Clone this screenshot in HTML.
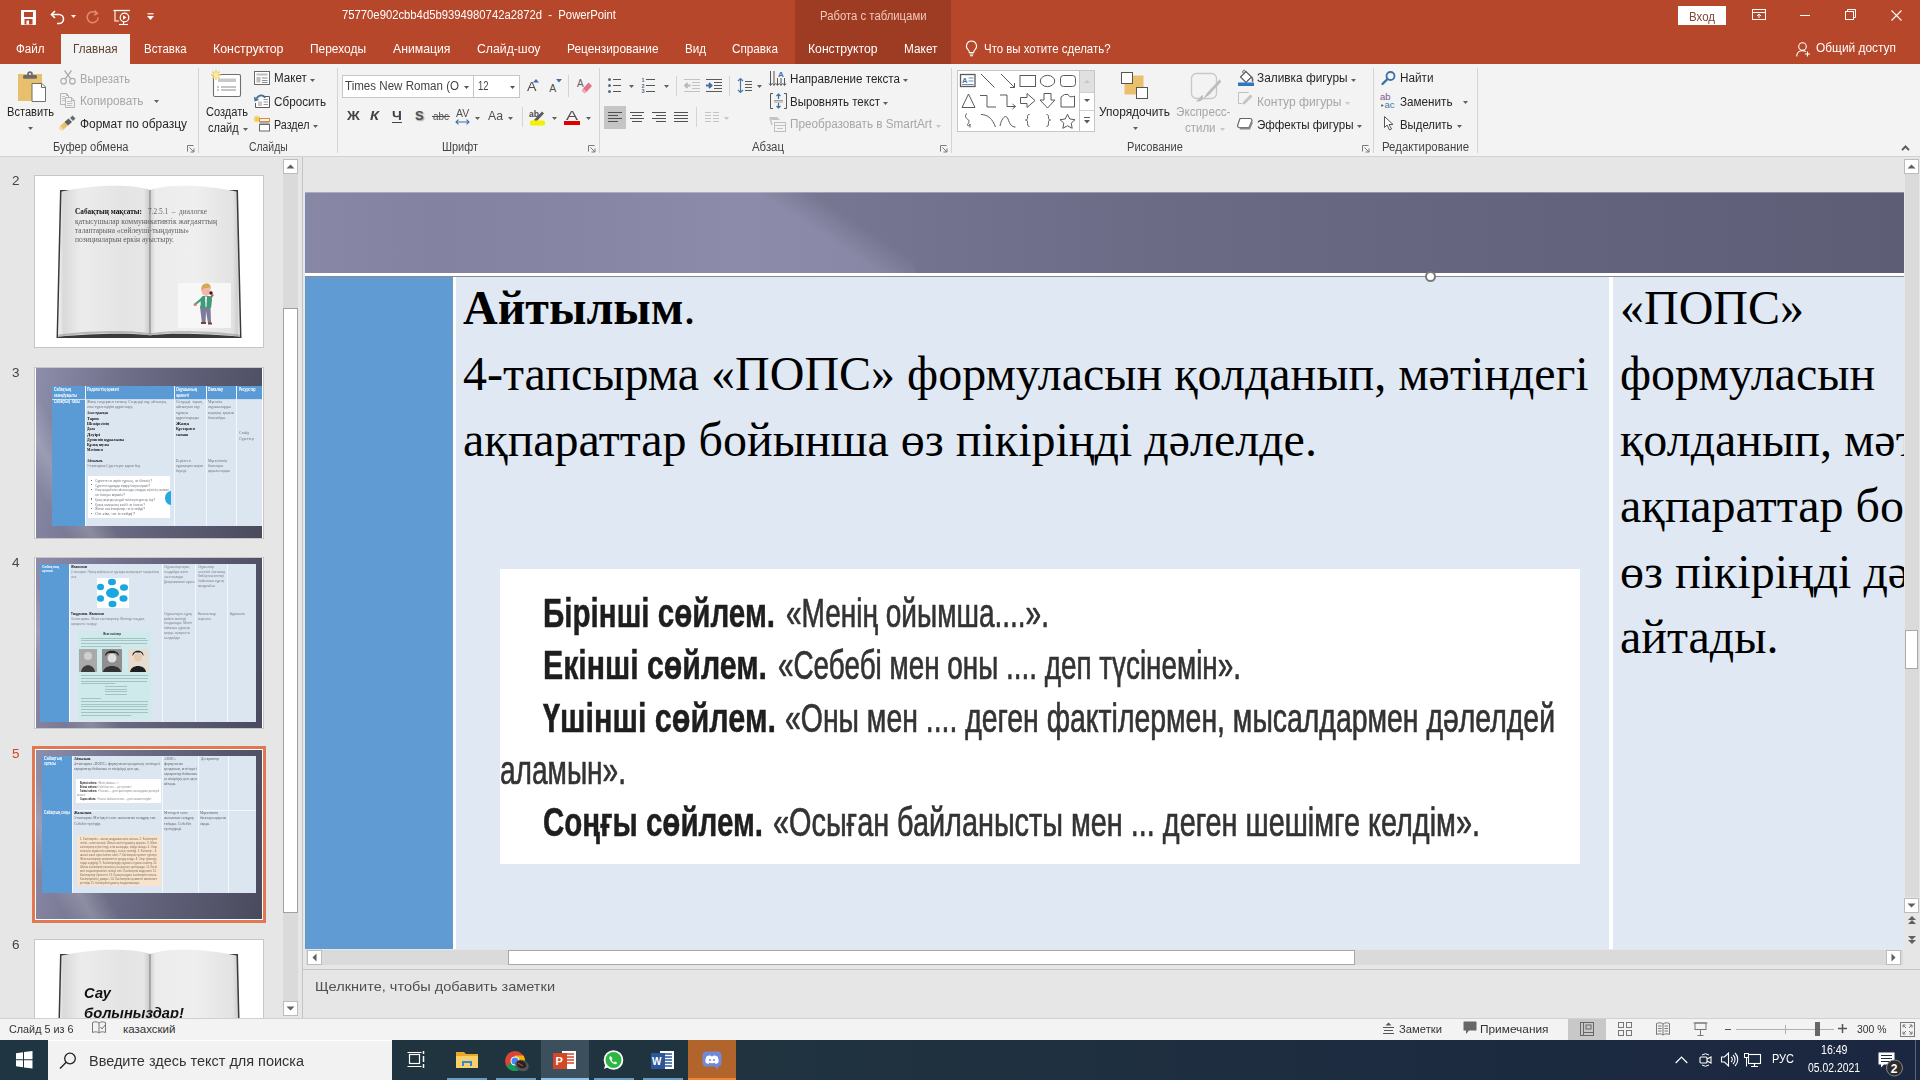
<!DOCTYPE html>
<html><head><meta charset="utf-8">
<style>
*{margin:0;padding:0;box-sizing:border-box}
html,body{width:1920px;height:1080px;overflow:hidden;background:#e6e6e6;font-family:"Liberation Sans",sans-serif;position:relative}
.a{position:absolute;white-space:nowrap}
svg.a{overflow:visible}

</style></head><body>
<div class="a" style="left:0px;top:0px;width:1920px;height:64px;background:#b7472a;"></div>
<div class="a" style="left:795px;top:0px;width:156px;height:64px;background:#9e3c23;"></div>
<svg class="a" style="left:21px;top:10px;" width="15" height="15" viewBox="0 0 15 15"><path d="M0.5 0.5h14v14h-14z" fill="#fff" stroke="#fff"/><rect x="3" y="2" width="9" height="5" fill="#b7472a"/><rect x="3.5" y="9" width="8" height="5.5" fill="#b7472a"/><rect x="5.5" y="10.5" width="2.5" height="4" fill="#fff"/></svg>
<svg class="a" style="left:50px;top:9px;" width="16" height="15" viewBox="0 0 16 15"><path d="M5 2 L1.5 5.5 L5 9" fill="none" stroke="#fff" stroke-width="1.6"/><path d="M2 5.5 H9 A4.5 4.5 0 0 1 9 14.5 H7" fill="none" stroke="#fff" stroke-width="1.6"/></svg>
<svg class="a" style="left:71px;top:15px;" width="6" height="4" viewBox="0 0 6 4"><path d="M0 0H5L2.5 3z" fill="#fff"/></svg>
<svg class="a" style="left:86px;top:10px;" width="14" height="14" viewBox="0 0 14 14"><path d="M10.5 3.2 A5.5 5.5 0 1 0 12.2 7.5" fill="none" stroke="#e38a73" stroke-width="1.5"/><path d="M8.5 0.5 L11.5 3.5 L8 5" fill="none" stroke="#e38a73" stroke-width="1.4"/></svg>
<svg class="a" style="left:113px;top:10px;" width="18" height="16" viewBox="0 0 18 16"><path d="M0.5 0.5H17" stroke="#fff" stroke-width="1.3"/><path d="M2 1V11H6" fill="none" stroke="#fff" stroke-width="1.1"/><circle cx="11.5" cy="7.5" r="4.3" fill="none" stroke="#fff" stroke-width="1.2"/><path d="M10 5.3V9.7L13.6 7.5z" fill="#fff"/><path d="M6 14.5H15" stroke="#fff" stroke-width="1.1"/><path d="M10.5 11.5V14.5" stroke="#fff" stroke-width="1.1"/></svg>
<svg class="a" style="left:147px;top:13px;" width="7" height="8" viewBox="0 0 7 8"><path d="M0.5 0.8H6.5" stroke="#fff" stroke-width="1.2"/><path d="M0 3H7L3.5 7z" fill="#fff"/></svg>
<div class="a" style="left:341.7px;top:9.34px;font-family:'Liberation Sans';font-size:12px;line-height:12px;color:#ffffff;transform:scaleX(0.9397);transform-origin:0 0;white-space:pre;">75770e902cbb4d5b9394980742a2872d  -  PowerPoint</div>
<div class="a" style="left:820.4px;top:9.64px;font-family:'Liberation Sans';font-size:12px;line-height:12px;color:#f3c9bb;transform:scaleX(0.9438);transform-origin:0 0;white-space:pre;">Работа с таблицами</div>
<div class="a" style="left:1678px;top:6px;width:48px;height:19px;background:#ffffff;"></div>
<div class="a" style="left:1689px;top:10.84px;font-family:'Liberation Sans';font-size:12px;line-height:12px;color:#7d4636;transform:scaleX(0.9574);transform-origin:0 0;white-space:pre;">Вход</div>
<svg class="a" style="left:1752px;top:9px;" width="14" height="11" viewBox="0 0 14 11"><rect x="0.5" y="0.5" width="13" height="10" fill="none" stroke="#fff"/><path d="M0.5 3.5H13.5" stroke="#fff"/><path d="M7 9V5M5 7L7 5L9 7" fill="none" stroke="#fff"/></svg>
<svg class="a" style="left:1800px;top:15px;" width="10" height="2" viewBox="0 0 10 2"><path d="M0 0.5H10" stroke="#fff"/></svg>
<svg class="a" style="left:1845px;top:9px;" width="11" height="11" viewBox="0 0 11 11"><rect x="0.5" y="2.5" width="8" height="8" fill="none" stroke="#fff"/><path d="M2.5 2.5V0.5H10.5V8.5H8.5" fill="none" stroke="#fff"/></svg>
<svg class="a" style="left:1891px;top:10px;" width="11" height="11" viewBox="0 0 11 11"><path d="M0.5 0.5L10.5 10.5M10.5 0.5L0.5 10.5" stroke="#fff" stroke-width="1.1"/></svg>
<div class="a" style="left:61px;top:34px;width:69px;height:30px;background:#f3f3f3;"></div>
<div class="a" style="left:15.6px;top:42.84px;font-family:'Liberation Sans';font-size:12px;line-height:12px;color:#ffffff;transform:scaleX(0.9656);transform-origin:0 0;white-space:pre;">Файл</div>
<div class="a" style="left:73px;top:42.84px;font-family:'Liberation Sans';font-size:12px;line-height:12px;color:#623f33;transform:scaleX(0.9740);transform-origin:0 0;white-space:pre;">Главная</div>
<div class="a" style="left:144px;top:42.84px;font-family:'Liberation Sans';font-size:12px;line-height:12px;color:#ffffff;transform:scaleX(0.9527);transform-origin:0 0;white-space:pre;">Вставка</div>
<div class="a" style="left:213px;top:42.84px;font-family:'Liberation Sans';font-size:12px;line-height:12px;color:#ffffff;transform:scaleX(1.0304);transform-origin:0 0;white-space:pre;">Конструктор</div>
<div class="a" style="left:310px;top:42.84px;font-family:'Liberation Sans';font-size:12px;line-height:12px;color:#ffffff;transform:scaleX(0.9947);transform-origin:0 0;white-space:pre;">Переходы</div>
<div class="a" style="left:393px;top:42.84px;font-family:'Liberation Sans';font-size:12px;line-height:12px;color:#ffffff;transform:scaleX(1.0205);transform-origin:0 0;white-space:pre;">Анимация</div>
<div class="a" style="left:477px;top:42.84px;font-family:'Liberation Sans';font-size:12px;line-height:12px;color:#ffffff;transform:scaleX(1.0206);transform-origin:0 0;white-space:pre;">Слайд-шоу</div>
<div class="a" style="left:567px;top:42.84px;font-family:'Liberation Sans';font-size:12px;line-height:12px;color:#ffffff;transform:scaleX(0.9874);transform-origin:0 0;white-space:pre;">Рецензирование</div>
<div class="a" style="left:685px;top:42.84px;font-family:'Liberation Sans';font-size:12px;line-height:12px;color:#ffffff;transform:scaleX(0.9669);transform-origin:0 0;white-space:pre;">Вид</div>
<div class="a" style="left:732px;top:42.84px;font-family:'Liberation Sans';font-size:12px;line-height:12px;color:#ffffff;transform:scaleX(0.9771);transform-origin:0 0;white-space:pre;">Справка</div>
<div class="a" style="left:807.5px;top:42.84px;font-family:'Liberation Sans';font-size:12px;line-height:12px;color:#ffffff;transform:scaleX(1.0158);transform-origin:0 0;white-space:pre;">Конструктор</div>
<div class="a" style="left:904.4px;top:42.84px;font-family:'Liberation Sans';font-size:12px;line-height:12px;color:#ffffff;transform:scaleX(0.9862);transform-origin:0 0;white-space:pre;">Макет</div>
<svg class="a" style="left:965px;top:40px;" width="13" height="17" viewBox="0 0 13 17"><path d="M6.5 1A5 5 0 0 0 3 9.6C4 10.6 4.3 11.5 4.3 12.5H8.7C8.7 11.5 9 10.6 10 9.6A5 5 0 0 0 6.5 1Z" fill="none" stroke="#fff" stroke-width="1.1"/><path d="M4.5 14H8.5M5 15.8H8" stroke="#fff" stroke-width="1.1"/></svg>
<div class="a" style="left:984px;top:42.84px;font-family:'Liberation Sans';font-size:12px;line-height:12px;color:#ffffff;transform:scaleX(0.9536);transform-origin:0 0;white-space:pre;">Что вы хотите сделать?</div>
<svg class="a" style="left:1796px;top:42px;" width="15" height="15" viewBox="0 0 15 15"><circle cx="6.5" cy="4.5" r="3.8" fill="none" stroke="#fff" stroke-width="1.1"/><path d="M0.7 14.5C0.7 10.8 3.2 8.6 6.5 8.6C7.8 8.6 8.9 9 9.8 9.6" fill="none" stroke="#fff" stroke-width="1.1"/><path d="M11.5 9.5V14.5M9 12H14" stroke="#fff" stroke-width="1.1"/></svg>
<div class="a" style="left:1815.7px;top:41.94px;font-family:'Liberation Sans';font-size:12px;line-height:12px;color:#ffffff;transform:scaleX(0.9922);transform-origin:0 0;white-space:pre;">Общий доступ</div>
<div class="a" style="left:0px;top:64px;width:1920px;height:92px;background:#f3f3f3;"></div>
<div class="a" style="left:0px;top:156px;width:1920px;height:1px;background:#d2d2d2;"></div>
<div class="a" style="left:198px;top:68px;width:1px;height:85px;background:#d4d4d4;"></div>
<div class="a" style="left:337px;top:68px;width:1px;height:85px;background:#d4d4d4;"></div>
<div class="a" style="left:599px;top:68px;width:1px;height:85px;background:#d4d4d4;"></div>
<div class="a" style="left:951px;top:68px;width:1px;height:85px;background:#d4d4d4;"></div>
<div class="a" style="left:1373px;top:68px;width:1px;height:85px;background:#d4d4d4;"></div>
<div class="a" style="left:1477px;top:68px;width:1px;height:85px;background:#d4d4d4;"></div>
<div class="a" style="left:52.6px;top:141.14px;font-family:'Liberation Sans';font-size:12px;line-height:12px;color:#444444;transform:scaleX(0.9258);transform-origin:0 0;white-space:pre;">Буфер обмена</div>
<svg class="a" style="left:187px;top:145px;" width="8" height="7" viewBox="0 0 8 7"><path d="M0.5 6.5V0.5H6.5" fill="none" stroke="#7a7a7a"/><path d="M2.5 2.5L7 7M7 3.5V7H3.5" fill="none" stroke="#7a7a7a"/></svg>
<div class="a" style="left:248.7px;top:141.14px;font-family:'Liberation Sans';font-size:12px;line-height:12px;color:#444444;transform:scaleX(0.8663);transform-origin:0 0;white-space:pre;">Слайды</div>
<div class="a" style="left:442px;top:141.14px;font-family:'Liberation Sans';font-size:12px;line-height:12px;color:#444444;transform:scaleX(0.9118);transform-origin:0 0;white-space:pre;">Шрифт</div>
<svg class="a" style="left:588px;top:145px;" width="8" height="7" viewBox="0 0 8 7"><path d="M0.5 6.5V0.5H6.5" fill="none" stroke="#7a7a7a"/><path d="M2.5 2.5L7 7M7 3.5V7H3.5" fill="none" stroke="#7a7a7a"/></svg>
<div class="a" style="left:751.5px;top:141.14px;font-family:'Liberation Sans';font-size:12px;line-height:12px;color:#444444;transform:scaleX(0.9503);transform-origin:0 0;white-space:pre;">Абзац</div>
<svg class="a" style="left:940px;top:145px;" width="8" height="7" viewBox="0 0 8 7"><path d="M0.5 6.5V0.5H6.5" fill="none" stroke="#7a7a7a"/><path d="M2.5 2.5L7 7M7 3.5V7H3.5" fill="none" stroke="#7a7a7a"/></svg>
<div class="a" style="left:1126.6px;top:141.14px;font-family:'Liberation Sans';font-size:12px;line-height:12px;color:#444444;transform:scaleX(0.9233);transform-origin:0 0;white-space:pre;">Рисование</div>
<svg class="a" style="left:1362px;top:145px;" width="8" height="7" viewBox="0 0 8 7"><path d="M0.5 6.5V0.5H6.5" fill="none" stroke="#7a7a7a"/><path d="M2.5 2.5L7 7M7 3.5V7H3.5" fill="none" stroke="#7a7a7a"/></svg>
<div class="a" style="left:1381.5px;top:141.14px;font-family:'Liberation Sans';font-size:12px;line-height:12px;color:#444444;transform:scaleX(0.9516);transform-origin:0 0;white-space:pre;">Редактирование</div>
<svg class="a" style="left:1901px;top:144.5px;" width="9" height="6" viewBox="0 0 9 6"><path d="M1 5.2L4.5 1.5L8 5.2" fill="none" stroke="#5a5a5a" stroke-width="1.9"/></svg>
<svg class="a" style="left:17px;top:71px;" width="30" height="32" viewBox="0 0 30 32"><rect x="1" y="3" width="24" height="27" fill="#e8bf6c"/>
    <rect x="6" y="4" width="14" height="3.8" rx="1.5" fill="#6b6b6b"/><circle cx="13" cy="3" r="2.8" fill="#6b6b6b"/><circle cx="13" cy="3" r="1.1" fill="#f3f3f3"/>
    <path d="M15 12.5H25L28.5 16V30.5H15Z" fill="#fff" stroke="#6f6f6f"/><path d="M24.5 12.5V16.5H28.5" fill="none" stroke="#6f6f6f"/></svg>
<div class="a" style="left:6.8px;top:106.44px;font-family:'Liberation Sans';font-size:12px;line-height:12px;color:#262626;transform:scaleX(0.9238);transform-origin:0 0;white-space:pre;">Вставить</div>
<svg class="a" style="left:28px;top:127px;" width="5" height="3" viewBox="0 0 5 3"><path d="M0 0H5L2.5 3z" fill="#606060"/></svg>
<svg class="a" style="left:60px;top:70px;" width="16" height="15" viewBox="0 0 16 15"><circle cx="3.6" cy="11.2" r="2.8" fill="none" stroke="#b0b0b0" stroke-width="1.3"/><circle cx="12.4" cy="11.2" r="2.8" fill="none" stroke="#b0b0b0" stroke-width="1.3"/><path d="M5.2 9L11.5 0.5M10.8 9L4.5 0.5" stroke="#b0b0b0" stroke-width="1.3"/></svg>
<div class="a" style="left:79.7px;top:72.59px;font-family:'Liberation Sans';font-size:12px;line-height:12px;color:#a6a6a6;transform:scaleX(0.9368);transform-origin:0 0;white-space:pre;">Вырезать</div>
<svg class="a" style="left:60px;top:93px;" width="16" height="15" viewBox="0 0 16 15"><path d="M0.5 0.5H6.5L8.5 2.5V11.5H0.5Z" fill="#f3f3f3" stroke="#b5b5b5"/><path d="M6.5 0.5V2.5H8.5" fill="none" stroke="#b5b5b5"/><path d="M5.5 4.5H11.5L14.5 7.5V14.5H5.5Z" fill="#f3f3f3" stroke="#b5b5b5"/><path d="M11.5 4.5V7.5H14.5" fill="none" stroke="#b5b5b5"/><path d="M2 3.5H5M2 5.5H5M2 7.5H5M7 8.5H12.5M7 10.5H12.5M7 12.5H12.5" stroke="#c0c0c0" stroke-width="1"/></svg>
<div class="a" style="left:79.7px;top:94.84px;font-family:'Liberation Sans';font-size:12px;line-height:12px;color:#a6a6a6;transform:scaleX(0.9826);transform-origin:0 0;white-space:pre;">Копировать</div>
<svg class="a" style="left:154px;top:100px;" width="5" height="3" viewBox="0 0 5 3"><path d="M0 0H5L2.5 3z" fill="#606060"/></svg>
<svg class="a" style="left:58px;top:116px;" width="19" height="15" viewBox="0 0 19 15"><path d="M1.5 10.5L6.5 6L10 9.5L5 14Z" fill="#e8bf6c"/><path d="M0.5 12L3 10L5.5 13.5L3 15Z" fill="#f2dcaa"/><path d="M6.5 6L10.5 2.5L14 6L10 9.5Z" fill="#5f5f5f"/><path d="M12 2L14.5 -0.5L17.5 2.5L15 5Z" fill="#6a6a6a"/></svg>
<div class="a" style="left:79.7px;top:117.84px;font-family:'Liberation Sans';font-size:12px;line-height:12px;color:#262626;transform:scaleX(0.9943);transform-origin:0 0;white-space:pre;">Формат по образцу</div>
<svg class="a" style="left:209px;top:69px;" width="33" height="29" viewBox="0 0 33 29"><rect x="4.5" y="5.5" width="27" height="22" rx="1.5" fill="#fff" stroke="#6f6f6f" stroke-width="1.1"/>
    <rect x="9" y="9.5" width="18" height="3.5" fill="#c9c9c9"/><path d="M8 18H10M12 18H27M8 21H10M12 21H27" stroke="#8d8d8d" stroke-width="1"/>
    <g stroke="#f2c94c" stroke-width="1.3"><path d="M7 1V11M2 6H12M3.5 2.5L10.5 9.5M10.5 2.5L3.5 9.5"/></g><circle cx="7" cy="6" r="2.6" fill="#fbe9a8"/></svg>
<div class="a" style="left:205.6px;top:106.24px;font-family:'Liberation Sans';font-size:12px;line-height:12px;color:#262626;transform:scaleX(0.9209);transform-origin:0 0;white-space:pre;">Создать</div>
<div class="a" style="left:207.8px;top:121.94px;font-family:'Liberation Sans';font-size:12px;line-height:12px;color:#262626;transform:scaleX(0.9164);transform-origin:0 0;white-space:pre;">слайд</div>
<svg class="a" style="left:242.5px;top:127.5px;" width="5" height="3" viewBox="0 0 5 3"><path d="M0 0H5L2.5 3z" fill="#606060"/></svg>
<svg class="a" style="left:254px;top:71px;" width="17" height="14" viewBox="0 0 17 14"><rect x="0.5" y="0.5" width="15" height="13" fill="#fff" stroke="#6a6a6a"/><rect x="2.5" y="2.5" width="11" height="2" fill="#bdbdbd"/><rect x="2.5" y="6" width="4" height="5.5" fill="#bdbdbd"/><path d="M8 7H13.5M8 9.5H13.5M8 11.5H13.5" stroke="#8a8a8a"/></svg>
<div class="a" style="left:273.8px;top:72.14px;font-family:'Liberation Sans';font-size:12px;line-height:12px;color:#262626;transform:scaleX(0.9656);transform-origin:0 0;white-space:pre;">Макет</div>
<svg class="a" style="left:310.4px;top:78.5px;" width="5" height="3" viewBox="0 0 5 3"><path d="M0 0H5L2.5 3z" fill="#606060"/></svg>
<svg class="a" style="left:253px;top:93px;" width="18" height="16" viewBox="0 0 18 16"><path d="M9.5 3.5H16.5V14.5H2.5V10" fill="#fff" stroke="#5a5a5a"/><rect x="5" y="8.5" width="4" height="4.5" fill="#c8c8c8"/><path d="M10.5 6.5H15M10.5 9H15M10.5 11.5H15" stroke="#9a9a9a"/><path d="M12 5C10.5 1.5 6 1.5 3.5 5.5" fill="none" stroke="#4a6f96" stroke-width="1.7"/><path d="M1 3.5L1.5 8.5L6 7Z" fill="#4a6f96"/></svg>
<div class="a" style="left:273.8px;top:95.54px;font-family:'Liberation Sans';font-size:12px;line-height:12px;color:#262626;transform:scaleX(0.9748);transform-origin:0 0;white-space:pre;">Сбросить</div>
<svg class="a" style="left:253px;top:115px;" width="18" height="17" viewBox="0 0 18 17"><g stroke="#f2c94c" stroke-width="1.1"><path d="M4 0.5V7.5M0.5 4H7.5M1.5 1.5L6.5 6.5M6.5 1.5L1.5 6.5"/></g><rect x="6.5" y="3.5" width="10" height="3" fill="none" stroke="#d9893c"/><rect x="6.5" y="9.5" width="10" height="6.5" fill="#fff" stroke="#6a6a6a"/><path d="M6.5 8H16.5" stroke="#6a6a6a"/></svg>
<div class="a" style="left:273.8px;top:118.54px;font-family:'Liberation Sans';font-size:12px;line-height:12px;color:#262626;transform:scaleX(0.8948);transform-origin:0 0;white-space:pre;">Раздел</div>
<svg class="a" style="left:313.4px;top:125px;" width="5" height="3" viewBox="0 0 5 3"><path d="M0 0H5L2.5 3z" fill="#606060"/></svg>
<div class="a" style="left:342px;top:75px;width:178px;height:23px;background:#fff;border:1px solid #c6c6c6"></div>
<div class="a" style="left:473px;top:75px;width:1px;height:23px;background:#c6c6c6;"></div>
<div class="a" style="left:345.2px;top:80.24px;font-family:'Liberation Sans';font-size:12px;line-height:12px;color:#444;transform:scaleX(0.9641);transform-origin:0 0;white-space:pre;">Times New Roman (O</div>
<svg class="a" style="left:464px;top:85.5px;" width="5" height="3" viewBox="0 0 5 3"><path d="M0 0H5L2.5 3z" fill="#555"/></svg>
<div class="a" style="left:477.8px;top:80.24px;font-family:'Liberation Sans';font-size:12px;line-height:12px;color:#444;transform:scaleX(0.7860);transform-origin:0 0;white-space:pre;">12</div>
<svg class="a" style="left:510px;top:85.5px;" width="5" height="3" viewBox="0 0 5 3"><path d="M0 0H5L2.5 3z" fill="#555"/></svg>
<div class="a" style="left:526.8px;top:80.27px;font-family:'Liberation Sans';font-size:13.5px;line-height:13.5px;color:#505050;transform:scaleX(1.0537);transform-origin:0 0;white-space:pre;">A</div>
<svg class="a" style="left:533px;top:78.5px;" width="6" height="4" viewBox="0 0 6 4"><path d="M0 3.5H6L3 0z" fill="#3e6fa8"/></svg>
<div class="a" style="left:549.3px;top:82.81px;font-family:'Liberation Sans';font-size:10.5px;line-height:10.5px;color:#505050;white-space:pre;">A</div>
<svg class="a" style="left:555.5px;top:78.5px;" width="6" height="4" viewBox="0 0 6 4"><path d="M0 0H6L3 3.5z" fill="#3e6fa8"/></svg>
<div class="a" style="left:568px;top:75px;width:1px;height:22px;background:#d4d4d4;"></div>
<svg class="a" style="left:577px;top:78px;" width="16" height="16" viewBox="0 0 16 16"><text x="0" y="9" font-family="Liberation Sans" font-size="10" fill="#606060">A</text><path d="M6 10.5L11.5 4.5L15 8L9.5 14Z" fill="#e8718a"/><path d="M6 10.5L8.5 13.5L9.5 14L7.5 15.5L4.5 12.5Z" fill="#f0a7b5"/></svg>
<div class="a" style="left:346.5px;top:110.02px;font-family:'Liberation Sans';font-size:12.5px;line-height:12.5px;color:#444;font-weight:700;transform:scaleX(1.1315);transform-origin:0 0;white-space:pre;">Ж</div>
<div class="a" style="left:370px;top:110.02px;font-family:'Liberation Sans';font-size:12.5px;line-height:12.5px;color:#444;font-weight:700;font-style:italic;transform:scaleX(1.1707);transform-origin:0 0;white-space:pre;">К</div>
<div class="a" style="left:392px;top:110.02px;font-family:'Liberation Sans';font-size:12.5px;line-height:12.5px;color:#444;font-weight:700;transform:scaleX(1.1254);transform-origin:0 0;white-space:pre;">Ч</div>
<div class="a" style="left:392px;top:122px;width:10px;height:1.3px;background:#444;"></div>
<div class="a" style="left:415px;top:108.5px;font-family:'Liberation Sans';font-size:13px;line-height:13px;font-weight:700;color:#505050;text-shadow:1px 1px 1.5px #9a9a9a">S</div>
<div class="a" style="left:433px;top:110.87px;font-family:'Liberation Sans';font-size:11.5px;line-height:11.5px;color:#505050;transform:scaleX(0.8627);transform-origin:0 0;white-space:pre;">abc</div>
<div class="a" style="left:432px;top:116px;width:18px;height:1px;background:#505050;"></div>
<div class="a" style="left:455.5px;top:107.77px;font-family:'Liberation Sans';font-size:11.5px;line-height:11.5px;color:#505050;transform:scaleX(0.9103);transform-origin:0 0;white-space:pre;">AV</div>
<svg class="a" style="left:455px;top:118.5px;" width="15" height="6" viewBox="0 0 15 6"><path d="M1 3H14M3.5 0.7L1 3L3.5 5.3M11.5 0.7L14 3L11.5 5.3" fill="none" stroke="#3e6fa8" stroke-width="1.1"/></svg>
<svg class="a" style="left:475.2px;top:117px;" width="5" height="3" viewBox="0 0 5 3"><path d="M0 0H5L2.5 3z" fill="#606060"/></svg>
<div class="a" style="left:488px;top:110.02px;font-family:'Liberation Sans';font-size:12.5px;line-height:12.5px;color:#505050;transform:scaleX(0.9806);transform-origin:0 0;white-space:pre;">Aa</div>
<svg class="a" style="left:508px;top:117px;" width="5" height="3" viewBox="0 0 5 3"><path d="M0 0H5L2.5 3z" fill="#606060"/></svg>
<div class="a" style="left:522px;top:107px;width:1px;height:20px;background:#d4d4d4;"></div>
<svg class="a" style="left:529px;top:108px;" width="17" height="18" viewBox="0 0 17 18"><text x="0" y="8.5" font-family="Liberation Sans" font-weight="700" font-size="8.5" fill="#505050">ab</text><path d="M5 12L13 3.5L15 5.5L7 14Z" fill="#5a5a5a"/><rect x="1" y="12.5" width="15" height="5" rx="1.5" fill="#f2f200"/></svg>
<svg class="a" style="left:552px;top:117px;" width="5" height="3" viewBox="0 0 5 3"><path d="M0 0H5L2.5 3z" fill="#606060"/></svg>
<div class="a" style="left:565.5px;top:109.72px;font-family:'Liberation Sans';font-size:12.5px;line-height:12.5px;color:#505050;transform:scaleX(1.4382);transform-origin:0 0;white-space:pre;">A</div>
<div class="a" style="left:564px;top:121px;width:16px;height:3.5px;background:#e00000;"></div>
<svg class="a" style="left:586px;top:117px;" width="5" height="3" viewBox="0 0 5 3"><path d="M0 0H5L2.5 3z" fill="#606060"/></svg>
<svg class="a" style="left:607px;top:77px;" width="16" height="17" viewBox="0 0 16 17"><g fill="#5a6d85"><circle cx="2.5" cy="2.5" r="1.5"/><circle cx="2.5" cy="8.5" r="1.5"/><circle cx="2.5" cy="14.5" r="1.5"/></g><path d="M6 2.5H14M6 8.5H14M6 14.5H14" stroke="#555" stroke-width="1"/></svg>
<svg class="a" style="left:629.4px;top:85.3px;" width="5" height="3" viewBox="0 0 5 3"><path d="M0 0H5L2.5 3z" fill="#606060"/></svg>
<svg class="a" style="left:641px;top:77px;" width="16" height="17" viewBox="0 0 16 17"><g font-family="Liberation Sans" font-size="5.5" font-weight="700" fill="#5a6d85"><text x="0.5" y="5">1</text><text x="0.5" y="10.5">2</text><text x="0.5" y="16">3</text></g><path d="M5 2.5H14M5 8.5H14M5 14.5H14" stroke="#555" stroke-width="1"/></svg>
<svg class="a" style="left:663.5px;top:85.3px;" width="5" height="3" viewBox="0 0 5 3"><path d="M0 0H5L2.5 3z" fill="#606060"/></svg>
<div class="a" style="left:676px;top:76px;width:1px;height:20px;background:#d4d4d4;"></div>
<svg class="a" style="left:683px;top:78px;" width="18" height="15" viewBox="0 0 18 15"><path d="M1 1.5H17M9 4.5H17M9 7.5H17M9 10.5H17M1 13.5H17" stroke="#c2c2c2" stroke-width="1"/><path d="M7.5 7.5H2M4.5 5L2 7.5L4.5 10" fill="none" stroke="#b8b8b8" stroke-width="1.8"/></svg>
<svg class="a" style="left:705px;top:78px;" width="18" height="15" viewBox="0 0 18 15"><path d="M1 1.5H17M9 4.5H17M9 7.5H17M9 10.5H17M1 13.5H17" stroke="#5a5a5a" stroke-width="1"/><path d="M1 7.5H6.5M4 5L6.5 7.5L4 10" fill="none" stroke="#3e6fa8" stroke-width="1.9"/></svg>
<div class="a" style="left:729px;top:76px;width:1px;height:20px;background:#d4d4d4;"></div>
<svg class="a" style="left:737px;top:77px;" width="16" height="17" viewBox="0 0 16 17"><path d="M3.5 1.5V15.5M1 4L3.5 1.5L6 4M1 13L3.5 15.5L6 13" fill="none" stroke="#4a78ad" stroke-width="1.2"/><path d="M8 4.5H15M8 7.5H15M8 10.5H15M8 13.5H15" stroke="#5a5a5a" stroke-width="1"/></svg>
<svg class="a" style="left:757.4px;top:85.3px;" width="5" height="3" viewBox="0 0 5 3"><path d="M0 0H5L2.5 3z" fill="#606060"/></svg>
<div class="a" style="left:604px;top:106px;width:22px;height:23px;background:#c5c5c5;"></div>
<svg class="a" style="left:608px;top:111px;" width="15" height="12" viewBox="0 0 15 12"><path d="M0 1.5H14M0 4.5H10M0 7.5H14M0 10.5H10" stroke="#505050" stroke-width="1"/></svg>
<svg class="a" style="left:629.5px;top:111px;" width="15" height="12" viewBox="0 0 15 12"><path d="M0 1.5H14M2 4.5H12M0 7.5H14M2 10.5H12" stroke="#505050" stroke-width="1"/></svg>
<svg class="a" style="left:652px;top:111px;" width="15" height="12" viewBox="0 0 15 12"><path d="M0 1.5H14M4 4.5H14M0 7.5H14M4 10.5H14" stroke="#505050" stroke-width="1"/></svg>
<svg class="a" style="left:673.5px;top:111px;" width="15" height="12" viewBox="0 0 15 12"><path d="M0 1.5H14M0 4.5H14M0 7.5H14M0 10.5H14" stroke="#505050" stroke-width="1"/></svg>
<div class="a" style="left:696px;top:107px;width:1px;height:20px;background:#d4d4d4;"></div>
<svg class="a" style="left:704.5px;top:111px;" width="15" height="12" viewBox="0 0 15 12"><path d="M0 1.5H6M8 1.5H14M0 4.5H6M8 4.5H14M0 7.5H6M8 7.5H14M0 10.5H6M8 10.5H14" stroke="#c4c4c4" stroke-width="1"/></svg>
<svg class="a" style="left:724.2px;top:117px;" width="5" height="3" viewBox="0 0 5 3"><path d="M0 0H5L2.5 3z" fill="#c8c8c8"/></svg>
<svg class="a" style="left:769px;top:70px;" width="17" height="17" viewBox="0 0 17 17"><path d="M1.5 1V15M5 1V15M8.5 8V15M12 8V15M15.5 8V15" stroke="#555" stroke-width="1"/><path d="M0 13.5L1.5 15.5L3 13.5M3.5 13.5L5 15.5L6.5 13.5M7 13.5L8.5 15.5L10 13.5M10.5 13.5L12 15.5L13.5 13.5M14 13.5L15.5 15.5L17 13.5" fill="none" stroke="#555"/><text x="9" y="7" font-family="Liberation Sans" font-weight="700" font-size="8" fill="#3e6fa8">A</text></svg>
<div class="a" style="left:789.7px;top:72.59px;font-family:'Liberation Sans';font-size:12px;line-height:12px;color:#262626;transform:scaleX(0.9669);transform-origin:0 0;white-space:pre;">Направление текста</div>
<svg class="a" style="left:903.2px;top:78.5px;" width="5" height="3" viewBox="0 0 5 3"><path d="M0 0H5L2.5 3z" fill="#606060"/></svg>
<svg class="a" style="left:769.5px;top:93px;" width="17" height="16" viewBox="0 0 17 16"><path d="M3 0.5H0.5V15.5H3M14 0.5H16.5V15.5H14" fill="none" stroke="#555"/><path d="M8.5 1V6M6.5 3L8.5 1L10.5 3M8.5 10V15M6.5 13L8.5 15L10.5 13" fill="none" stroke="#3e6fa8" stroke-width="1.2"/><path d="M4 7.5H13M4 9H13" stroke="#8a8a8a" stroke-width="0.8"/></svg>
<div class="a" style="left:789.7px;top:95.54px;font-family:'Liberation Sans';font-size:12px;line-height:12px;color:#262626;transform:scaleX(0.9627);transform-origin:0 0;white-space:pre;">Выровнять текст</div>
<svg class="a" style="left:883.4px;top:101.5px;" width="5" height="3" viewBox="0 0 5 3"><path d="M0 0H5L2.5 3z" fill="#606060"/></svg>
<svg class="a" style="left:769px;top:116px;" width="18" height="16" viewBox="0 0 18 16"><path d="M0 1H8L11 4H3Z" fill="#c4c4c4"/><path d="M1 2L3 9" stroke="#c4c4c4" stroke-width="1.5"/><rect x="5.5" y="6.5" width="11" height="9" fill="none" stroke="#bdbdbd"/><path d="M5.5 9.5H16.5M8 12.5H14" stroke="#c4c4c4"/></svg>
<div class="a" style="left:789.7px;top:118.44px;font-family:'Liberation Sans';font-size:12px;line-height:12px;color:#a6a6a6;transform:scaleX(0.9755);transform-origin:0 0;white-space:pre;">Преобразовать в SmartArt</div>
<svg class="a" style="left:936px;top:124.5px;" width="5" height="3" viewBox="0 0 5 3"><path d="M0 0H5L2.5 3z" fill="#c8c8c8"/></svg>
<div class="a" style="left:957px;top:70px;width:138px;height:62px;background:#fff;border:1px solid #c6c6c6"></div>
<div class="a" style="left:1079px;top:71px;width:1px;height:60px;background:#c6c6c6;"></div>
<div class="a" style="left:1080px;top:71px;width:14px;height:20.5px;background:#e0e0e0;"></div>
<div class="a" style="left:1080px;top:91.5px;width:14px;height:1px;background:#d0d0d0;"></div>
<div class="a" style="left:1080px;top:110px;width:14px;height:1px;background:#d0d0d0;"></div>
<svg class="a" style="left:1084px;top:80px;" width="6" height="3" viewBox="0 0 6 3"><path d="M0 3H6L3 0z" fill="#c8c8c8"/></svg>
<svg class="a" style="left:1084px;top:99px;" width="6" height="3" viewBox="0 0 6 3"><path d="M0 0H6L3 3z" fill="#5a5a5a"/></svg>
<svg class="a" style="left:1084px;top:117px;" width="6" height="7" viewBox="0 0 6 7"><path d="M0 0.5H6" stroke="#5a5a5a"/><path d="M0 3H6L3 6.5z" fill="#5a5a5a"/></svg>
<svg class="a" style="left:957px;top:70px;" width="138" height="62" viewBox="0 0 138 62"><g fill="none" stroke="#5a5a5a" stroke-width="1">
    <rect x="3.5" y="4.5" width="14.5" height="12" stroke-width="1.3"/><text x="5" y="12.5" font-family="Liberation Sans" font-size="7.5" fill="#3e6fa8" stroke="none" font-weight="700">A</text><path d="M11.5 8H16.5M11.5 11H16.5M5 14.5H16.5" stroke="#3e6fa8" stroke-width="0.8"/>
    <path d="M24 4L37.5 17.5"/>
    <path d="M44 4L57.5 17.5M57.5 13V17.5H53"/>
    <rect x="63" y="5.5" width="15.5" height="11"/>
    <ellipse cx="90.5" cy="11" rx="7.2" ry="5.6"/>
    <rect x="103.5" y="5.5" width="15" height="11" rx="3"/>
    <path d="M11.5 24L18 37.5H5Z"/>
    <path d="M23 25.5H30V37H39"/>
    <path d="M43 25H50V36.5H58.5M55.5 34L58.5 36.5L55.5 39"/>
    <path d="M63.5 27.5H70V23.5L78 30.5L70 37.5V33.5H63.5Z"/>
    <path d="M87 23.5H94V30H98L90.5 38L83 30H87Z"/>
    <path d="M104 27L107.5 24.5H111C112 27.5 116 27 117.5 26V37H104Z"/>
    <path d="M10 43.5C7 45.5 9 48.5 11 49.5C13 50.5 11.5 53.5 10.5 54.5C10 56.5 13 56 13 54V57.5"/>
    <path d="M24 44.5C31 44.5 35.5 49 38.5 57"/>
    <path d="M43 56C45 47 49 44 51 49C53 54 54 57 58.5 57"/>
    <path d="M72.5 44.5C70.5 44.5 70.5 45.5 70.5 48.5C70.5 49.5 69.5 50 68.5 50C69.5 50 70.5 50.5 70.5 51.5C70.5 54.5 70.5 56.5 72.5 56.5"/>
    <path d="M89.5 44.5C91.5 44.5 91.5 45.5 91.5 48.5C91.5 49.5 92.5 50 93.5 50C92.5 50 91.5 50.5 91.5 51.5C91.5 54.5 91.5 56.5 89.5 56.5"/>
    <path d="M110.5 44.3L112.8 49L118 49.7L114.2 53.2L115.2 58.3L110.5 55.8L105.8 58.3L106.8 53.2L103 49.7L108.2 49Z"/>
    </g></svg>
<svg class="a" style="left:1120px;top:71px;" width="30" height="29" viewBox="0 0 30 29"><rect x="4.5" y="4.5" width="19" height="19" fill="#ebc06c"/><rect x="1.5" y="1.5" width="11" height="11" fill="#fff" stroke="#555"/><rect x="16.5" y="16.5" width="11" height="11" fill="#fff" stroke="#555"/></svg>
<div class="a" style="left:1099.4px;top:106.24px;font-family:'Liberation Sans';font-size:12px;line-height:12px;color:#262626;transform:scaleX(0.9941);transform-origin:0 0;white-space:pre;">Упорядочить</div>
<svg class="a" style="left:1133px;top:127px;" width="5" height="3" viewBox="0 0 5 3"><path d="M0 0H5L2.5 3z" fill="#606060"/></svg>
<svg class="a" style="left:1190px;top:72px;" width="32" height="31" viewBox="0 0 32 31"><rect x="1.5" y="1.5" width="25" height="25" rx="5" fill="none" stroke="#c8c8c8" stroke-width="1.3"/><path d="M30 7L17 21L13 27L19 23L31 10Z" fill="#bdbdbd"/><path d="M13 27C10 30 8 30 6 29C9 28 10 24 13 23Z" fill="#bdbdbd"/></svg>
<div class="a" style="left:1175.6px;top:106.24px;font-family:'Liberation Sans';font-size:12px;line-height:12px;color:#a6a6a6;transform:scaleX(0.9757);transform-origin:0 0;white-space:pre;">Экспресс-</div>
<div class="a" style="left:1184.5px;top:121.84px;font-family:'Liberation Sans';font-size:12px;line-height:12px;color:#a6a6a6;transform:scaleX(0.9559);transform-origin:0 0;white-space:pre;">стили</div>
<svg class="a" style="left:1219.5px;top:127.5px;" width="5" height="3" viewBox="0 0 5 3"><path d="M0 0H5L2.5 3z" fill="#c8c8c8"/></svg>
<svg class="a" style="left:1237px;top:69px;" width="18" height="18" viewBox="0 0 18 18"><path d="M3.5 8L9 2.5L14.5 8L9 13.5Z" fill="#fff" stroke="#555" stroke-width="1.1"/><path d="M6 4C5 1 8 0 8.5 3" fill="none" stroke="#555"/><path d="M14.5 8C16 10 16 12 15 12.5" fill="none" stroke="#5a5a5a" stroke-width="1.5"/><rect x="1" y="13.5" width="16" height="3.5" fill="#2e75c8"/></svg>
<div class="a" style="left:1257.3px;top:72.14px;font-family:'Liberation Sans';font-size:12px;line-height:12px;color:#262626;transform:scaleX(0.9876);transform-origin:0 0;white-space:pre;">Заливка фигуры</div>
<svg class="a" style="left:1351.4px;top:78.5px;" width="5" height="3" viewBox="0 0 5 3"><path d="M0 0H5L2.5 3z" fill="#606060"/></svg>
<svg class="a" style="left:1238px;top:92px;" width="16" height="13" viewBox="0 0 16 13"><path d="M0.5 11.5V0.5H10.5" fill="none" stroke="#c0c0c0"/><path d="M0.5 11.5H4" stroke="#c0c0c0"/><path d="M5 10L12.5 2.5L14.5 4.5L7 12L4.5 12.5Z" fill="#c4c4c4"/></svg>
<div class="a" style="left:1257.3px;top:95.54px;font-family:'Liberation Sans';font-size:12px;line-height:12px;color:#a6a6a6;transform:scaleX(1.0069);transform-origin:0 0;white-space:pre;">Контур фигуры</div>
<svg class="a" style="left:1345px;top:101.5px;" width="5" height="3" viewBox="0 0 5 3"><path d="M0 0H5L2.5 3z" fill="#c8c8c8"/></svg>
<svg class="a" style="left:1237px;top:117px;" width="17" height="14" viewBox="0 0 17 14"><path d="M3 1.5H13A2 2 0 0 1 15 3.5L12 10.5H2A2 2 0 0 1 0.5 8.5Z" fill="#fff" stroke="#666" stroke-width="1.2"/><path d="M15 3.5L15.8 6L13 12.5H3L2 10.5H12Z" fill="#8a8a8a"/></svg>
<div class="a" style="left:1257.3px;top:118.54px;font-family:'Liberation Sans';font-size:12px;line-height:12px;color:#262626;transform:scaleX(0.9648);transform-origin:0 0;white-space:pre;">Эффекты фигуры</div>
<svg class="a" style="left:1357px;top:125px;" width="5" height="3" viewBox="0 0 5 3"><path d="M0 0H5L2.5 3z" fill="#606060"/></svg>
<svg class="a" style="left:1381px;top:71px;" width="15" height="14" viewBox="0 0 15 14"><circle cx="9.5" cy="5" r="4" fill="none" stroke="#3e6fa8" stroke-width="1.8"/><path d="M6.5 8L1.5 13" stroke="#3e6fa8" stroke-width="2.4" stroke-linecap="round"/></svg>
<div class="a" style="left:1400.2px;top:72.14px;font-family:'Liberation Sans';font-size:12px;line-height:12px;color:#262626;transform:scaleX(0.9781);transform-origin:0 0;white-space:pre;">Найти</div>
<svg class="a" style="left:1380px;top:92px;" width="18" height="17" viewBox="0 0 18 17"><text x="0" y="8" font-family="Liberation Sans" font-size="9.5" fill="#7a5b8c">ab</text><text x="4.5" y="15.5" font-family="Liberation Sans" font-size="9.5" fill="#3e7aa8">ac</text><path d="M1 13.5H3.5M2 12V15" stroke="#555" stroke-width="0.8"/></svg>
<div class="a" style="left:1400px;top:95.54px;font-family:'Liberation Sans';font-size:12px;line-height:12px;color:#262626;transform:scaleX(0.9733);transform-origin:0 0;white-space:pre;">Заменить</div>
<svg class="a" style="left:1462.8px;top:101px;" width="5" height="3" viewBox="0 0 5 3"><path d="M0 0H5L2.5 3z" fill="#606060"/></svg>
<svg class="a" style="left:1384px;top:116px;" width="11" height="15" viewBox="0 0 11 15"><path d="M0.5 0.5V11.5L3 9L5.5 14L7.5 13L5 8.5H9Z" fill="#fff" stroke="#555"/></svg>
<div class="a" style="left:1400px;top:118.54px;font-family:'Liberation Sans';font-size:12px;line-height:12px;color:#262626;transform:scaleX(0.9483);transform-origin:0 0;white-space:pre;">Выделить</div>
<svg class="a" style="left:1456.5px;top:125px;" width="5" height="3" viewBox="0 0 5 3"><path d="M0 0H5L2.5 3z" fill="#606060"/></svg>
<div class="a" style="left:0px;top:157px;width:302px;height:861px;background:#e6e6e6;"></div>
<div class="a" style="left:302px;top:157px;width:1px;height:861px;background:#c4c4c4;"></div>
<div class="a" style="left:283px;top:174px;width:15px;height:827px;background:#dadada;"></div>
<div class="a" style="left:283px;top:159px;width:15px;height:15px;background:#fff;border:1px solid #bcbcbc"></div>
<svg class="a" style="left:283px;top:159px;" width="15" height="15" viewBox="0 0 15 15"><path d="M3.5 9.5H11.5L7.5 5.5z" fill="#606060"/></svg>
<div class="a" style="left:283px;top:1001px;width:15px;height:15px;background:#fff;border:1px solid #bcbcbc"></div>
<svg class="a" style="left:283px;top:1001px;" width="15" height="15" viewBox="0 0 15 15"><path d="M3.5 5.5H11.5L7.5 9.5z" fill="#606060"/></svg>
<div class="a" style="left:283px;top:308px;width:15px;height:605px;background:#fff;border:1px solid #a0a0a0"></div>
<div class="a" style="left:12px;top:175.42px;font-family:'Liberation Sans';font-size:12.5px;line-height:12.5px;color:#444;transform:scaleX(1.0787);transform-origin:0 0;white-space:pre;">2</div>
<div class="a" style="left:12px;top:366.92px;font-family:'Liberation Sans';font-size:12.5px;line-height:12.5px;color:#444;transform:scaleX(1.0787);transform-origin:0 0;white-space:pre;">3</div>
<div class="a" style="left:12px;top:557.42px;font-family:'Liberation Sans';font-size:12.5px;line-height:12.5px;color:#444;transform:scaleX(1.0787);transform-origin:0 0;white-space:pre;">4</div>
<div class="a" style="left:12px;top:747.92px;font-family:'Liberation Sans';font-size:12.5px;line-height:12.5px;color:#d24726;transform:scaleX(1.0787);transform-origin:0 0;white-space:pre;">5</div>
<div class="a" style="left:12px;top:939.42px;font-family:'Liberation Sans';font-size:12.5px;line-height:12.5px;color:#444;transform:scaleX(1.0787);transform-origin:0 0;white-space:pre;">6</div>
<div class="a" style="left:34px;top:175px;width:230px;height:173px;background:#fff;border:1px solid #c6c6c6"></div>
<svg class="a" style="left:35px;top:176px;" width="228" height="170" viewBox="0 0 228 170"><defs><linearGradient id="pg35_176" x1="0" x2="1"><stop offset="0" stop-color="#f4f4f4"/><stop offset="0.06" stop-color="#d9d9d9"/><stop offset="0.25" stop-color="#ececec"/><stop offset="0.7" stop-color="#e4e4e4"/><stop offset="0.93" stop-color="#e6e6e6"/><stop offset="1" stop-color="#c8c8c8"/></linearGradient>
    <linearGradient id="pr35_176" x1="0" x2="1"><stop offset="0" stop-color="#cfcfcf"/><stop offset="0.06" stop-color="#ececec"/><stop offset="0.5" stop-color="#efefef"/><stop offset="0.92" stop-color="#e2e2e2"/><stop offset="0.97" stop-color="#d0d0d0"/><stop offset="1" stop-color="#f0f0f0"/></linearGradient></defs>
    <path d="M25 14L203 14L206.5 162L21.5 162Z" fill="#3a3a3a"/>
    <path d="M26.5 15.5C60 8 100 8 115 14L115 159.5C100 157 60 157 23 160.8Z" fill="url(#pg35_176)"/>
    <path d="M115 14C130 8 168 8 201.5 15.5L205 160.8C168 157 130 157 115 159.5Z" fill="url(#pr35_176)"/>
    <path d="M23.5 158.5C60 154 100 154 115 157.5C130 154 168 154 204.5 158.5L205 160.5C168 156.5 130 156.5 115 159.3C100 156.5 60 156.5 23 160.5Z" fill="#8a8a8a" opacity="0.5"/>
    <path d="M115 14V158" stroke="#6a6a6a" stroke-width="0.8"/></svg>
<div class="a" style="left:75px;top:208.33px;font-family:'Liberation Serif';font-size:7.6px;line-height:7.6px;color:#111;font-weight:700;transform:scaleX(0.9608);transform-origin:0 0;white-space:pre;">Сабақтың мақсаты:</div>
<div class="a" style="left:147.5px;top:208.33px;font-family:'Liberation Serif';font-size:7.6px;line-height:7.6px;color:#666;transform:scaleX(0.9638);transform-origin:0 0;white-space:pre;">7.2.5.1  –  диалогке</div>
<div class="a" style="left:75px;top:217.83px;font-family:'Liberation Serif';font-size:7.6px;line-height:7.6px;color:#606060;transform:scaleX(1.0039);transform-origin:0 0;white-space:pre;">қатысушылар коммуникативтік жағдаяттың</div>
<div class="a" style="left:75px;top:226.83px;font-family:'Liberation Serif';font-size:7.6px;line-height:7.6px;color:#606060;transform:scaleX(0.9731);transform-origin:0 0;white-space:pre;">талаптарына «сөйлеуші-тыңдаушы»</div>
<div class="a" style="left:75px;top:235.83px;font-family:'Liberation Serif';font-size:7.6px;line-height:7.6px;color:#606060;transform:scaleX(0.9919);transform-origin:0 0;white-space:pre;">позицияларын еркін ауыстыру.</div>
<div class="a" style="left:178px;top:283px;width:53px;height:45px;background:#f7f7f7;"></div>
<svg class="a" style="left:190px;top:283px;" width="30" height="44" viewBox="0 0 30 44"><path d="M13 15L10 24L12 40H15.5L16 28L18 40H21L20.5 24L19 15Z" fill="#7d7a9c"/><path d="M10.5 18C10 15 12 13 14 13H18.5C21 13 22 15 22 17L21 25H11Z" fill="#3f9a78"/><path d="M15 13.5L17 13.5L16.5 24L15.5 24Z" fill="#f2f2f2"/><path d="M11 16.5L5.5 21" stroke="#3f9a78" stroke-width="2.2" stroke-linecap="round"/><circle cx="5.2" cy="21.5" r="1.6" fill="#d47a7a"/><path d="M20.5 15L23 11.5" stroke="#8a6a5a" stroke-width="2"/><ellipse cx="16" cy="8" rx="4.3" ry="5" fill="#f0b8a8"/><path d="M11.5 8C10.5 2 14 0.5 16.5 0.5C20 0.5 21.5 3 20.5 7L19.5 4.5C17 5.5 14 4 13 6.5Z" fill="#d9a655"/><circle cx="21" cy="10" r="1.7" fill="#4a1010"/><path d="M11 40H16M18 40.5H22" stroke="#6b4a3a" stroke-width="2.2"/></svg>
<div class="a" style="left:34px;top:367px;width:230px;height:172px;border:1px solid #c6c6c6;background:#fff"></div>
<div class="a" style="left:36px;top:368px;width:226px;height:170px;background:linear-gradient(100deg,#8e8eab 0%,#6f6f8a 35%,#5c5c74 65%,#4a4a5e 100%);overflow:hidden"><div class="a" style="left:-30px;top:-20px;width:113.0px;height:272.0px;background:linear-gradient(60deg,rgba(255,255,255,0) 40%,rgba(255,255,255,0.18) 50%,rgba(255,255,255,0) 60%)"></div></div>
<div class="a" style="left:52px;top:386px;width:210px;height:139.5px;background:#dce6f1;"></div>
<div class="a" style="left:52px;top:386px;width:32.5px;height:139.5px;background:#5b9bd5;"></div>
<div class="a" style="left:52px;top:386px;width:210px;height:12.5px;background:#5b9bd5;"></div>
<div class="a" style="left:52px;top:398.5px;width:210px;height:1px;background:#c9dcf0;"></div>
<div class="a" style="left:84.5px;top:386px;width:1px;height:139.5px;background:#f4f8fc;"></div>
<div class="a" style="left:173.8px;top:386px;width:1px;height:139.5px;background:#f4f8fc;"></div>
<div class="a" style="left:205.5px;top:386px;width:1px;height:139.5px;background:#f4f8fc;"></div>
<div class="a" style="left:236.3px;top:386px;width:1px;height:139.5px;background:#f4f8fc;"></div>
<div class="a" style="left:54px;top:388.31px;font-family:'Liberation Sans';font-size:4.6px;line-height:4.6px;color:#ffffff;font-weight:700;transform:scaleX(0.7529);transform-origin:0 0;white-space:pre;">Сабақтың</div>
<div class="a" style="left:54px;top:393.81px;font-family:'Liberation Sans';font-size:4.6px;line-height:4.6px;color:#ffffff;font-weight:700;transform:scaleX(0.7097);transform-origin:0 0;white-space:pre;">кезеңі/уақыты</div>
<div class="a" style="left:87px;top:388.31px;font-family:'Liberation Sans';font-size:4.6px;line-height:4.6px;color:#ffffff;font-weight:700;transform:scaleX(0.7670);transform-origin:0 0;white-space:pre;">Педагогтің әрекеті</div>
<div class="a" style="left:176px;top:388.31px;font-family:'Liberation Sans';font-size:4.6px;line-height:4.6px;color:#ffffff;font-weight:700;transform:scaleX(0.8185);transform-origin:0 0;white-space:pre;">Оқушының</div>
<div class="a" style="left:176px;top:393.81px;font-family:'Liberation Sans';font-size:4.6px;line-height:4.6px;color:#ffffff;font-weight:700;transform:scaleX(0.8000);transform-origin:0 0;white-space:pre;">әрекеті</div>
<div class="a" style="left:208px;top:388.31px;font-family:'Liberation Sans';font-size:4.6px;line-height:4.6px;color:#ffffff;font-weight:700;transform:scaleX(0.8170);transform-origin:0 0;white-space:pre;">Бағалау</div>
<div class="a" style="left:238.5px;top:388.31px;font-family:'Liberation Sans';font-size:4.6px;line-height:4.6px;color:#ffffff;font-weight:700;transform:scaleX(0.7031);transform-origin:0 0;white-space:pre;">Ресурстар</div>
<div class="a" style="left:54px;top:400.31px;font-family:'Liberation Sans';font-size:4.6px;line-height:4.6px;color:#ffffff;font-weight:700;transform:scaleX(0.7027);transform-origin:0 0;white-space:pre;">Сабақтың  басы</div>
<div class="a" style="left:87px;top:400.35px;font-family:'Liberation Serif';font-size:4.6px;line-height:4.6px;color:#6e737c;transform:scaleX(0.8491);transform-origin:0 0;white-space:pre;">Жаңа сөздермен танысу. Сөздерді оқу, айтылуы,</div>
<div class="a" style="left:87px;top:405.35px;font-family:'Liberation Serif';font-size:4.6px;line-height:4.6px;color:#6e737c;transform:scaleX(0.8465);transform-origin:0 0;white-space:pre;">оны түрлендіріп құрастыру.</div>
<div class="a" style="left:87px;top:411.35px;font-family:'Liberation Serif';font-size:4.6px;line-height:4.6px;color:#111111;font-weight:700;transform:scaleX(0.6483);transform-origin:0 0;white-space:pre;">Асыл тұқымды</div>
<div class="a" style="left:87px;top:416.65px;font-family:'Liberation Serif';font-size:4.6px;line-height:4.6px;color:#111111;font-weight:700;transform:scaleX(0.9412);transform-origin:0 0;white-space:pre;">Тарих</div>
<div class="a" style="left:87px;top:421.95px;font-family:'Liberation Serif';font-size:4.6px;line-height:4.6px;color:#111111;font-weight:700;transform:scaleX(0.8386);transform-origin:0 0;white-space:pre;">Шежіресінің</div>
<div class="a" style="left:87px;top:427.25px;font-family:'Liberation Serif';font-size:4.6px;line-height:4.6px;color:#111111;font-weight:700;transform:scaleX(0.7711);transform-origin:0 0;white-space:pre;">Дала</div>
<div class="a" style="left:87px;top:432.55px;font-family:'Liberation Serif';font-size:4.6px;line-height:4.6px;color:#111111;font-weight:700;transform:scaleX(1.0310);transform-origin:0 0;white-space:pre;">Дәуірі</div>
<div class="a" style="left:87px;top:437.85px;font-family:'Liberation Serif';font-size:4.6px;line-height:4.6px;color:#111111;font-weight:700;transform:scaleX(0.8318);transform-origin:0 0;white-space:pre;">Дүниенің құрылымы</div>
<div class="a" style="left:87px;top:443.15px;font-family:'Liberation Serif';font-size:4.6px;line-height:4.6px;color:#111111;font-weight:700;transform:scaleX(0.8292);transform-origin:0 0;white-space:pre;">Құлақ шулы</div>
<div class="a" style="left:87px;top:448.45px;font-family:'Liberation Serif';font-size:4.6px;line-height:4.6px;color:#111111;font-weight:700;transform:scaleX(0.7853);transform-origin:0 0;white-space:pre;">Мәтінмен</div>
<div class="a" style="left:87px;top:458.85px;font-family:'Liberation Serif';font-size:4.6px;line-height:4.6px;color:#111111;font-weight:700;transform:scaleX(0.7191);transform-origin:0 0;white-space:pre;">Айтылым.</div>
<div class="a" style="left:87px;top:463.85px;font-family:'Liberation Serif';font-size:4.6px;line-height:4.6px;color:#6e737c;transform:scaleX(0.8107);transform-origin:0 0;white-space:pre;">1-тапсырма Суреттерге қарап бер.</div>
<div class="a" style="left:176px;top:400.35px;font-family:'Liberation Serif';font-size:4.6px;line-height:4.6px;color:#6e737c;transform:scaleX(0.8312);transform-origin:0 0;white-space:pre;">Сөздерді  тауып,</div>
<div class="a" style="left:176px;top:405.35px;font-family:'Liberation Serif';font-size:4.6px;line-height:4.6px;color:#6e737c;transform:scaleX(0.8663);transform-origin:0 0;white-space:pre;">айтылуын оқу</div>
<div class="a" style="left:176px;top:411.35px;font-family:'Liberation Serif';font-size:4.6px;line-height:4.6px;color:#6e737c;transform:scaleX(0.7515);transform-origin:0 0;white-space:pre;">тұрақты</div>
<div class="a" style="left:176px;top:416.35px;font-family:'Liberation Serif';font-size:4.6px;line-height:4.6px;color:#6e737c;transform:scaleX(0.8927);transform-origin:0 0;white-space:pre;">құрастырады</div>
<div class="a" style="left:176px;top:421.85px;font-family:'Liberation Serif';font-size:4.6px;line-height:4.6px;color:#111111;font-weight:700;transform:scaleX(1.1138);transform-origin:0 0;white-space:pre;">Жаңа</div>
<div class="a" style="left:176px;top:427.35px;font-family:'Liberation Serif';font-size:4.6px;line-height:4.6px;color:#111111;font-weight:700;transform:scaleX(0.8415);transform-origin:0 0;white-space:pre;">Құстармен</div>
<div class="a" style="left:176px;top:432.85px;font-family:'Liberation Serif';font-size:4.6px;line-height:4.6px;color:#111111;font-weight:700;transform:scaleX(0.7515);transform-origin:0 0;white-space:pre;">тыныш</div>
<div class="a" style="left:208px;top:400.35px;font-family:'Liberation Serif';font-size:4.6px;line-height:4.6px;color:#6e737c;transform:scaleX(0.8319);transform-origin:0 0;white-space:pre;">Мұғалім</div>
<div class="a" style="left:208px;top:405.35px;font-family:'Liberation Serif';font-size:4.6px;line-height:4.6px;color:#6e737c;transform:scaleX(0.9036);transform-origin:0 0;white-space:pre;">оқушыларды</div>
<div class="a" style="left:208px;top:411.35px;font-family:'Liberation Serif';font-size:4.6px;line-height:4.6px;color:#6e737c;transform:scaleX(0.7422);transform-origin:0 0;white-space:pre;">мадақтау  арқылы</div>
<div class="a" style="left:208px;top:416.35px;font-family:'Liberation Serif';font-size:4.6px;line-height:4.6px;color:#6e737c;transform:scaleX(0.8294);transform-origin:0 0;white-space:pre;">бағалайды.</div>
<div class="a" style="left:238.5px;top:431.35px;font-family:'Liberation Serif';font-size:4.6px;line-height:4.6px;color:#6e737c;transform:scaleX(0.8195);transform-origin:0 0;white-space:pre;">Слайд</div>
<div class="a" style="left:238.5px;top:437.35px;font-family:'Liberation Serif';font-size:4.6px;line-height:4.6px;color:#6e737c;transform:scaleX(0.8362);transform-origin:0 0;white-space:pre;">Суреттер</div>
<div class="a" style="left:176px;top:458.85px;font-family:'Liberation Serif';font-size:4.6px;line-height:4.6px;color:#6e737c;transform:scaleX(0.8889);transform-origin:0 0;white-space:pre;">Берілген</div>
<div class="a" style="left:176px;top:463.85px;font-family:'Liberation Serif';font-size:4.6px;line-height:4.6px;color:#6e737c;transform:scaleX(0.7934);transform-origin:0 0;white-space:pre;">сұрақтарға жауап</div>
<div class="a" style="left:176px;top:469.35px;font-family:'Liberation Serif';font-size:4.6px;line-height:4.6px;color:#6e737c;transform:scaleX(0.8234);transform-origin:0 0;white-space:pre;">береді.</div>
<div class="a" style="left:208px;top:458.85px;font-family:'Liberation Serif';font-size:4.6px;line-height:4.6px;color:#6e737c;transform:scaleX(0.8255);transform-origin:0 0;white-space:pre;">Мұғалімнің</div>
<div class="a" style="left:208px;top:463.85px;font-family:'Liberation Serif';font-size:4.6px;line-height:4.6px;color:#6e737c;transform:scaleX(0.8414);transform-origin:0 0;white-space:pre;">бағалауы</div>
<div class="a" style="left:208px;top:469.35px;font-family:'Liberation Serif';font-size:4.6px;line-height:4.6px;color:#6e737c;transform:scaleX(0.7694);transform-origin:0 0;white-space:pre;">арқылы оқиды</div>
<div class="a" style="left:88px;top:475.5px;width:81.5px;height:42px;background:#ffffff;"></div>
<div class="a" style="left:91px;top:479.6px;width:1.2px;height:1.2px;background:#777;"></div>
<div class="a" style="left:95px;top:479.06px;font-family:'Liberation Sans';font-size:4.3px;line-height:4.3px;color:#6e737c;transform:scaleX(0.7803);transform-origin:0 0;white-space:pre;">Суретте не көріп тұрсың, не білесің?</div>
<div class="a" style="left:91px;top:484.3px;width:1.2px;height:1.2px;background:#777;"></div>
<div class="a" style="left:95px;top:483.76px;font-family:'Liberation Sans';font-size:4.3px;line-height:4.3px;color:#6e737c;transform:scaleX(0.6693);transform-origin:0 0;white-space:pre;">Суреттегі адамдар кімдер болуы мүмкін?</div>
<div class="a" style="left:91px;top:489.0px;width:1.2px;height:1.2px;background:#777;"></div>
<div class="a" style="left:95px;top:488.46px;font-family:'Liberation Sans';font-size:4.3px;line-height:4.3px;color:#6e737c;transform:scaleX(0.6111);transform-origin:0 0;white-space:pre;">Олар қандай іспен айналысады, олардың еңбегінің нәтижесі</div>
<div class="a" style="left:95px;top:493.16px;font-family:'Liberation Sans';font-size:4.3px;line-height:4.3px;color:#6e737c;transform:scaleX(0.8496);transform-origin:0 0;white-space:pre;">не болуы мүмкін?</div>
<div class="a" style="left:91px;top:498.40000000000003px;width:1.2px;height:1.2px;background:#777;"></div>
<div class="a" style="left:95px;top:497.86px;font-family:'Liberation Sans';font-size:4.3px;line-height:4.3px;color:#6e737c;transform:scaleX(0.6681);transform-origin:0 0;white-space:pre;">Қазақ жерінде қандай табиғи ресурстар бар?</div>
<div class="a" style="left:91px;top:503.1px;width:1.2px;height:1.2px;background:#777;"></div>
<div class="a" style="left:95px;top:502.56px;font-family:'Liberation Sans';font-size:4.3px;line-height:4.3px;color:#6e737c;transform:scaleX(0.7440);transform-origin:0 0;white-space:pre;">Қазақ халқының кәсібі не болған?</div>
<div class="a" style="left:91px;top:507.8px;width:1.2px;height:1.2px;background:#777;"></div>
<div class="a" style="left:95px;top:507.26px;font-family:'Liberation Sans';font-size:4.3px;line-height:4.3px;color:#6e737c;transform:scaleX(0.8593);transform-origin:0 0;white-space:pre;">Жеке кәсіпкерлер не істейді?</div>
<div class="a" style="left:91px;top:512.5px;width:1.2px;height:1.2px;background:#777;"></div>
<div class="a" style="left:95px;top:511.96px;font-family:'Liberation Sans';font-size:4.3px;line-height:4.3px;color:#6e737c;transform:scaleX(1.0870);transform-origin:0 0;white-space:pre;">Ол кім, не істейді?</div>
<svg class="a" style="left:165px;top:491px;" width="6" height="14" viewBox="0 0 6 14"><path d="M6 0A6 7 0 0 0 6 14Z" fill="#29a8e0"/></svg>
<div class="a" style="left:34px;top:557px;width:230px;height:172px;border:1px solid #c6c6c6;background:#fff"></div>
<div class="a" style="left:36px;top:558px;width:226px;height:170px;background:linear-gradient(100deg,#8e8eab 0%,#6f6f8a 35%,#5c5c74 65%,#4a4a5e 100%);overflow:hidden"><div class="a" style="left:-30px;top:-20px;width:113.0px;height:272.0px;background:linear-gradient(60deg,rgba(255,255,255,0) 40%,rgba(255,255,255,0.18) 50%,rgba(255,255,255,0) 60%)"></div></div>
<div class="a" style="left:40px;top:564px;width:216px;height:158px;background:#dce6f1;"></div>
<div class="a" style="left:40px;top:564px;width:29px;height:158px;background:#5b9bd5;"></div>
<div class="a" style="left:69px;top:564px;width:1px;height:158px;background:#f4f8fc;"></div>
<div class="a" style="left:161.8px;top:564px;width:1px;height:158px;background:#f4f8fc;"></div>
<div class="a" style="left:195.2px;top:564px;width:1px;height:158px;background:#f4f8fc;"></div>
<div class="a" style="left:227px;top:564px;width:1px;height:158px;background:#f4f8fc;"></div>
<div class="a" style="left:42px;top:565.14px;font-family:'Liberation Sans';font-size:4.2px;line-height:4.2px;color:#ffffff;font-weight:700;transform:scaleX(0.8261);transform-origin:0 0;white-space:pre;">Сабақтың</div>
<div class="a" style="left:42px;top:569.14px;font-family:'Liberation Sans';font-size:4.2px;line-height:4.2px;color:#ffffff;font-weight:700;transform:scaleX(0.7162);transform-origin:0 0;white-space:pre;">ортасы</div>
<div class="a" style="left:71px;top:565.14px;font-family:'Liberation Sans';font-size:4.2px;line-height:4.2px;color:#111111;font-weight:700;transform:scaleX(0.7541);transform-origin:0 0;white-space:pre;">Жазылым</div>
<div class="a" style="left:71px;top:569.64px;font-family:'Liberation Sans';font-size:4.2px;line-height:4.2px;color:#7a7f88;transform:scaleX(0.6515);transform-origin:0 0;white-space:pre;">2-тапсырма. «Қазақ жерінің асыл тұқымды жылқылары» тақырыбына</div>
<div class="a" style="left:71px;top:574.64px;font-family:'Liberation Sans';font-size:4.2px;line-height:4.2px;color:#7a7f88;transform:scaleX(0.6105);transform-origin:0 0;white-space:pre;">эссе.</div>
<div class="a" style="left:97px;top:577.5px;width:32px;height:30px;background:#ffffff;"></div>
<svg class="a" style="left:97px;top:577.5px;" width="32" height="30" viewBox="0 0 32 30"><g fill="#1aa6df"><ellipse cx="15.5" cy="15" rx="6.5" ry="5"/><ellipse cx="15" cy="4" rx="4" ry="3.2"/><ellipse cx="15.5" cy="26" rx="4" ry="3.2"/><ellipse cx="3.5" cy="9" rx="3.5" ry="3.2"/><ellipse cx="27" cy="9.5" rx="4" ry="3.2"/><ellipse cx="3.5" cy="20.5" rx="3.5" ry="3.2"/><ellipse cx="26.5" cy="20.5" rx="4" ry="3.2"/></g></svg>
<div class="a" style="left:71px;top:611.64px;font-family:'Liberation Sans';font-size:4.2px;line-height:4.2px;color:#111111;font-weight:700;transform:scaleX(0.7102);transform-origin:0 0;white-space:pre;">Тыңдалым. Жазылым</div>
<div class="a" style="left:71px;top:616.64px;font-family:'Liberation Sans';font-size:4.2px;line-height:4.2px;color:#7a7f88;transform:scaleX(0.7965);transform-origin:0 0;white-space:pre;">3-тапсырма. Жеке кәсіпкерлер. Мәтінді тыңдап,</div>
<div class="a" style="left:71px;top:621.64px;font-family:'Liberation Sans';font-size:4.2px;line-height:4.2px;color:#7a7f88;transform:scaleX(0.7314);transform-origin:0 0;white-space:pre;">ақпаратты талдау.</div>
<div class="a" style="left:164px;top:565.14px;font-family:'Liberation Sans';font-size:4.2px;line-height:4.2px;color:#7a7f88;transform:scaleX(0.8019);transform-origin:0 0;white-space:pre;">Оқушылар оқып,</div>
<div class="a" style="left:164px;top:569.94px;font-family:'Liberation Sans';font-size:4.2px;line-height:4.2px;color:#7a7f88;transform:scaleX(0.7805);transform-origin:0 0;white-space:pre;">тыңдайды және</div>
<div class="a" style="left:164px;top:574.74px;font-family:'Liberation Sans';font-size:4.2px;line-height:4.2px;color:#7a7f88;transform:scaleX(0.7721);transform-origin:0 0;white-space:pre;">эссе жазады</div>
<div class="a" style="left:164px;top:579.54px;font-family:'Liberation Sans';font-size:4.2px;line-height:4.2px;color:#7a7f88;transform:scaleX(0.7152);transform-origin:0 0;white-space:pre;">Диаграммамен жұмыс</div>
<div class="a" style="left:197.5px;top:565.14px;font-family:'Liberation Sans';font-size:4.2px;line-height:4.2px;color:#7a7f88;transform:scaleX(0.7746);transform-origin:0 0;white-space:pre;">Оқушылар</div>
<div class="a" style="left:197.5px;top:569.74px;font-family:'Liberation Sans';font-size:4.2px;line-height:4.2px;color:#7a7f88;transform:scaleX(0.8862);transform-origin:0 0;white-space:pre;">эссесін бағалау</div>
<div class="a" style="left:197.5px;top:574.34px;font-family:'Liberation Sans';font-size:4.2px;line-height:4.2px;color:#7a7f88;transform:scaleX(0.7396);transform-origin:0 0;white-space:pre;">Кейбір мәселелер</div>
<div class="a" style="left:197.5px;top:578.94px;font-family:'Liberation Sans';font-size:4.2px;line-height:4.2px;color:#7a7f88;transform:scaleX(0.8689);transform-origin:0 0;white-space:pre;">бойынша сұрақ</div>
<div class="a" style="left:197.5px;top:583.54px;font-family:'Liberation Sans';font-size:4.2px;line-height:4.2px;color:#7a7f88;transform:scaleX(1.1429);transform-origin:0 0;white-space:pre;">жауабы</div>
<div class="a" style="left:164px;top:611.64px;font-family:'Liberation Sans';font-size:4.2px;line-height:4.2px;color:#7a7f88;transform:scaleX(0.7701);transform-origin:0 0;white-space:pre;">Оқушыларға сұрақ</div>
<div class="a" style="left:164px;top:616.54px;font-family:'Liberation Sans';font-size:4.2px;line-height:4.2px;color:#7a7f88;transform:scaleX(0.8244);transform-origin:0 0;white-space:pre;">қойып мәтінді</div>
<div class="a" style="left:164px;top:621.44px;font-family:'Liberation Sans';font-size:4.2px;line-height:4.2px;color:#7a7f88;transform:scaleX(0.8025);transform-origin:0 0;white-space:pre;">тыңдатады. Мәтін</div>
<div class="a" style="left:164px;top:626.34px;font-family:'Liberation Sans';font-size:4.2px;line-height:4.2px;color:#7a7f88;transform:scaleX(0.7132);transform-origin:0 0;white-space:pre;">бойынша сұрақтар</div>
<div class="a" style="left:164px;top:631.24px;font-family:'Liberation Sans';font-size:4.2px;line-height:4.2px;color:#7a7f88;transform:scaleX(0.7560);transform-origin:0 0;white-space:pre;">қояды, ақпаратты</div>
<div class="a" style="left:164px;top:636.14px;font-family:'Liberation Sans';font-size:4.2px;line-height:4.2px;color:#7a7f88;transform:scaleX(0.8325);transform-origin:0 0;white-space:pre;">талдайды</div>
<div class="a" style="left:197.5px;top:611.64px;font-family:'Liberation Sans';font-size:4.2px;line-height:4.2px;color:#7a7f88;transform:scaleX(1.1417);transform-origin:0 0;white-space:pre;">Бағалау</div>
<div class="a" style="left:197.5px;top:616.64px;font-family:'Liberation Sans';font-size:4.2px;line-height:4.2px;color:#7a7f88;transform:scaleX(0.9422);transform-origin:0 0;white-space:pre;">парағы</div>
<div class="a" style="left:230px;top:611.64px;font-family:'Liberation Sans';font-size:4.2px;line-height:4.2px;color:#7a7f88;transform:scaleX(0.6421);transform-origin:0 0;white-space:pre;">Аудиожазба</div>
<div class="a" style="left:78px;top:630.5px;width:73px;height:88px;background:#cfeaea;"></div>
<div class="a" style="left:103px;top:632.65px;font-family:'Liberation Sans';font-size:3.6px;line-height:3.6px;color:#333;font-weight:700;transform:scaleX(0.7196);transform-origin:0 0;white-space:pre;">Жеке кәсіпкер</div>
<div class="a" style="left:81px;top:637.5px;width:65px;height:0.7px;background:#a6c1c4;"></div>
<div class="a" style="left:81px;top:640.3px;width:67px;height:0.7px;background:#a6c1c4;"></div>
<div class="a" style="left:81px;top:643.1px;width:66px;height:0.7px;background:#a6c1c4;"></div>
<div class="a" style="left:81px;top:645.9px;width:40px;height:0.7px;background:#a6c1c4;"></div>
<div class="a" style="left:79px;top:649px;width:18px;height:22.5px;background:#a9a9a9;"></div>
<div class="a" style="left:102px;top:649px;width:20px;height:22.5px;background:#8f8f8f;"></div>
<div class="a" style="left:128px;top:649px;width:21px;height:22.5px;background:#e6dcd2;"></div>
<svg class="a" style="left:79px;top:649px;" width="70" height="23" viewBox="0 0 70 23"><circle cx="9" cy="7" r="4" fill="#cfcfcf"/><path d="M2 23C3 14 15 14 16 23Z" fill="#3c3c3c"/><circle cx="33" cy="9" r="4.5" fill="#e0e0e0"/><path d="M26 7C26 0 40 0 40 7L37 4H29Z" fill="#222"/><path d="M24 23C25 15 41 15 42 23Z" fill="#333"/><circle cx="59" cy="8.5" r="4" fill="#e8c8a8"/><path d="M53.5 7C53 0 65 0 64.5 7L62 3.5H56Z" fill="#222"/><path d="M51 23C52 15 66 15 67 23Z" fill="#1e1e1e"/></svg>
<div class="a" style="left:81px;top:675.0px;width:67px;height:0.7px;background:#a6c1c4;"></div>
<div class="a" style="left:81px;top:677.8px;width:67px;height:0.7px;background:#a6c1c4;"></div>
<div class="a" style="left:81px;top:680.6px;width:66px;height:0.7px;background:#a6c1c4;"></div>
<div class="a" style="left:81px;top:683.4px;width:34px;height:0.7px;background:#a6c1c4;"></div>
<div class="a" style="left:105px;top:686.0px;width:22px;height:0.7px;background:#a6c1c4;"></div>
<div class="a" style="left:105px;top:688.6px;width:22px;height:0.7px;background:#a6c1c4;"></div>
<div class="a" style="left:105px;top:691.2px;width:22px;height:0.7px;background:#a6c1c4;"></div>
<div class="a" style="left:105px;top:693.8px;width:22px;height:0.7px;background:#a6c1c4;"></div>
<div class="a" style="left:81px;top:698.0px;width:20px;height:0.7px;background:#a6c1c4;"></div>
<div class="a" style="left:81px;top:700.8px;width:67px;height:0.7px;background:#a6c1c4;"></div>
<div class="a" style="left:81px;top:703.6px;width:67px;height:0.7px;background:#a6c1c4;"></div>
<div class="a" style="left:81px;top:706.4px;width:66px;height:0.7px;background:#a6c1c4;"></div>
<div class="a" style="left:81px;top:709.2px;width:67px;height:0.7px;background:#a6c1c4;"></div>
<div class="a" style="left:81px;top:712.0px;width:67px;height:0.7px;background:#a6c1c4;"></div>
<div class="a" style="left:81px;top:714.8px;width:50px;height:0.7px;background:#a6c1c4;"></div>
<div class="a" style="left:32px;top:746px;width:234px;height:177px;border:3px solid #e07852"></div>
<div class="a" style="left:35px;top:749px;width:228px;height:171px;background:#ffffff;"></div>
<div class="a" style="left:36px;top:750px;width:226px;height:169px;background:linear-gradient(100deg,#8e8eab 0%,#6f6f8a 35%,#5c5c74 65%,#4a4a5e 100%);overflow:hidden"><div class="a" style="left:-30px;top:-20px;width:113.0px;height:270.40000000000003px;background:linear-gradient(60deg,rgba(255,255,255,0) 40%,rgba(255,255,255,0.18) 50%,rgba(255,255,255,0) 60%)"></div></div>
<div class="a" style="left:42px;top:756px;width:214px;height:137px;background:#dce6f1;"></div>
<div class="a" style="left:42px;top:756px;width:30px;height:137px;background:#5b9bd5;"></div>
<div class="a" style="left:72px;top:756px;width:1px;height:137px;background:#f4f8fc;"></div>
<div class="a" style="left:162.2px;top:756px;width:1px;height:137px;background:#f4f8fc;"></div>
<div class="a" style="left:198.3px;top:756px;width:1px;height:137px;background:#f4f8fc;"></div>
<div class="a" style="left:228.2px;top:756px;width:1px;height:137px;background:#f4f8fc;"></div>
<div class="a" style="left:72px;top:810.4px;width:184px;height:1px;background:#f4f8fc;"></div>
<div class="a" style="left:43.5px;top:756.81px;font-family:'Liberation Sans';font-size:4.6px;line-height:4.6px;color:#ffffff;font-weight:700;transform:scaleX(0.7972);transform-origin:0 0;white-space:pre;">Сабақтың</div>
<div class="a" style="left:43.5px;top:761.81px;font-family:'Liberation Sans';font-size:4.6px;line-height:4.6px;color:#ffffff;font-weight:700;transform:scaleX(0.7124);transform-origin:0 0;white-space:pre;">ортасы</div>
<div class="a" style="left:43.5px;top:811.31px;font-family:'Liberation Sans';font-size:4.6px;line-height:4.6px;color:#ffffff;font-weight:700;transform:scaleX(0.7241);transform-origin:0 0;white-space:pre;">Сабақтың соңы</div>
<div class="a" style="left:73.5px;top:756.85px;font-family:'Liberation Serif';font-size:4.6px;line-height:4.6px;color:#111111;font-weight:700;transform:scaleX(0.7640);transform-origin:0 0;white-space:pre;">Айтылым.</div>
<div class="a" style="left:73.5px;top:761.85px;font-family:'Liberation Serif';font-size:4.6px;line-height:4.6px;color:#5e636b;transform:scaleX(0.7983);transform-origin:0 0;white-space:pre;">4-тапсырма «ПОПС» формуласын қолданып, мәтіндегі</div>
<div class="a" style="left:73.5px;top:767.35px;font-family:'Liberation Serif';font-size:4.6px;line-height:4.6px;color:#5e636b;transform:scaleX(0.8075);transform-origin:0 0;white-space:pre;">ақпараттар бойынша өз пікіріңді дәлелде.</div>
<div class="a" style="left:76px;top:778.7px;width:85.3px;height:24.6px;background:#ffffff;"></div>
<div class="a" style="left:79.5px;top:781.82px;font-family:'Liberation Sans';font-size:3.4px;line-height:3.4px;color:#222;font-weight:700;transform:scaleX(0.6392);transform-origin:0 0;white-space:pre;">Бірінші сөйлем.</div>
<div class="a" style="left:98px;top:781.82px;font-family:'Liberation Sans';font-size:3.4px;line-height:3.4px;color:#8a8a8a;transform:scaleX(0.6598);transform-origin:0 0;white-space:pre;">«Менің ойымша....».</div>
<div class="a" style="left:79.5px;top:785.82px;font-family:'Liberation Sans';font-size:3.4px;line-height:3.4px;color:#222;font-weight:700;transform:scaleX(0.6770);transform-origin:0 0;white-space:pre;">Екінші сөйлем.</div>
<div class="a" style="left:97px;top:785.82px;font-family:'Liberation Sans';font-size:3.4px;line-height:3.4px;color:#8a8a8a;transform:scaleX(0.6212);transform-origin:0 0;white-space:pre;">«Себебі мен оны .... деп түсінемін».</div>
<div class="a" style="left:79.5px;top:789.82px;font-family:'Liberation Sans';font-size:3.4px;line-height:3.4px;color:#222;font-weight:700;transform:scaleX(0.6574);transform-origin:0 0;white-space:pre;">Үшінші сөйлем.</div>
<div class="a" style="left:98px;top:789.82px;font-family:'Liberation Sans';font-size:3.4px;line-height:3.4px;color:#8a8a8a;transform:scaleX(0.6635);transform-origin:0 0;white-space:pre;">«Оны мен .... деген фактілермен, мысалдармен дәлелдей</div>
<div class="a" style="left:76.5px;top:793.82px;font-family:'Liberation Sans';font-size:3.4px;line-height:3.4px;color:#8a8a8a;transform:scaleX(0.5914);transform-origin:0 0;white-space:pre;">аламын».</div>
<div class="a" style="left:79.5px;top:798.32px;font-family:'Liberation Sans';font-size:3.4px;line-height:3.4px;color:#222;font-weight:700;transform:scaleX(0.6333);transform-origin:0 0;white-space:pre;">Соңғы сөйлем.</div>
<div class="a" style="left:97px;top:798.32px;font-family:'Liberation Sans';font-size:3.4px;line-height:3.4px;color:#8a8a8a;transform:scaleX(0.6615);transform-origin:0 0;white-space:pre;">«Осыған байланысты мен ... деген шешімге келдім».</div>
<div class="a" style="left:73.5px;top:811.35px;font-family:'Liberation Serif';font-size:4.6px;line-height:4.6px;color:#111111;font-weight:700;transform:scaleX(0.7961);transform-origin:0 0;white-space:pre;">Жазылым.</div>
<div class="a" style="left:73.5px;top:816.35px;font-family:'Liberation Serif';font-size:4.6px;line-height:4.6px;color:#5e636b;transform:scaleX(0.7771);transform-origin:0 0;white-space:pre;">5-тапсырма. Мәтіндегі сөзге жазылатын сөзқұрау тап.</div>
<div class="a" style="left:73.5px;top:821.85px;font-family:'Liberation Serif';font-size:4.6px;line-height:4.6px;color:#5e636b;transform:scaleX(0.7978);transform-origin:0 0;white-space:pre;">Себебін түсіндір.</div>
<div class="a" style="left:164px;top:756.85px;font-family:'Liberation Serif';font-size:4.6px;line-height:4.6px;color:#5e636b;transform:scaleX(0.6809);transform-origin:0 0;white-space:pre;">«ПОПС»</div>
<div class="a" style="left:164px;top:761.95px;font-family:'Liberation Serif';font-size:4.6px;line-height:4.6px;color:#5e636b;transform:scaleX(0.7780);transform-origin:0 0;white-space:pre;">формуласын</div>
<div class="a" style="left:164px;top:767.05px;font-family:'Liberation Serif';font-size:4.6px;line-height:4.6px;color:#5e636b;transform:scaleX(0.8318);transform-origin:0 0;white-space:pre;">қолданып, мәтіндегі</div>
<div class="a" style="left:164px;top:772.15px;font-family:'Liberation Serif';font-size:4.6px;line-height:4.6px;color:#5e636b;transform:scaleX(0.8095);transform-origin:0 0;white-space:pre;">ақпараттар бойынша</div>
<div class="a" style="left:164px;top:777.25px;font-family:'Liberation Serif';font-size:4.6px;line-height:4.6px;color:#5e636b;transform:scaleX(0.8021);transform-origin:0 0;white-space:pre;">өз пікіріңді дәлелдеп</div>
<div class="a" style="left:164px;top:782.35px;font-family:'Liberation Serif';font-size:4.6px;line-height:4.6px;color:#5e636b;transform:scaleX(0.7901);transform-origin:0 0;white-space:pre;">айтады.</div>
<div class="a" style="left:200.5px;top:756.85px;font-family:'Liberation Serif';font-size:4.6px;line-height:4.6px;color:#5e636b;transform:scaleX(0.7701);transform-origin:0 0;white-space:pre;">Дескриптор</div>
<div class="a" style="left:164px;top:811.35px;font-family:'Liberation Serif';font-size:4.6px;line-height:4.6px;color:#5e636b;transform:scaleX(0.7849);transform-origin:0 0;white-space:pre;">Мәтіндегі сөзге</div>
<div class="a" style="left:164px;top:816.45px;font-family:'Liberation Serif';font-size:4.6px;line-height:4.6px;color:#5e636b;transform:scaleX(0.7480);transform-origin:0 0;white-space:pre;">жазылатын сөзқұрау</div>
<div class="a" style="left:164px;top:821.55px;font-family:'Liberation Serif';font-size:4.6px;line-height:4.6px;color:#5e636b;transform:scaleX(0.8504);transform-origin:0 0;white-space:pre;">табады. Себебін</div>
<div class="a" style="left:164px;top:826.65px;font-family:'Liberation Serif';font-size:4.6px;line-height:4.6px;color:#5e636b;transform:scaleX(0.7918);transform-origin:0 0;white-space:pre;">түсіндіреді.</div>
<div class="a" style="left:200px;top:811.35px;font-family:'Liberation Serif';font-size:4.6px;line-height:4.6px;color:#5e636b;transform:scaleX(0.7821);transform-origin:0 0;white-space:pre;">Мұғалімнің</div>
<div class="a" style="left:200px;top:816.45px;font-family:'Liberation Serif';font-size:4.6px;line-height:4.6px;color:#5e636b;transform:scaleX(0.7644);transform-origin:0 0;white-space:pre;">бағалауы арқылы</div>
<div class="a" style="left:200px;top:821.55px;font-family:'Liberation Serif';font-size:4.6px;line-height:4.6px;color:#5e636b;transform:scaleX(0.7373);transform-origin:0 0;white-space:pre;">оқиды.</div>
<div class="a" style="left:77px;top:835px;width:83.5px;height:51px;background:#f8e3cd;"></div>
<div class="a" style="left:80px;top:838.24px;font-family:'Liberation Sans';font-size:3.5px;line-height:3.5px;color:#7d6f62;transform:scaleX(0.7900);transform-origin:0 0;white-space:pre;">1. Кәсіпкерлік – халық шаруашылығы саласы. 2. Кәсіпкерлік</div>
<div class="a" style="left:80px;top:842.19px;font-family:'Liberation Sans';font-size:3.5px;line-height:3.5px;color:#7d6f62;transform:scaleX(0.7881);transform-origin:0 0;white-space:pre;">негізі – жеке меншік. Шағын кәсіпті дамыту арқылы. 3. Жеке</div>
<div class="a" style="left:80px;top:846.14px;font-family:'Liberation Sans';font-size:3.5px;line-height:3.5px;color:#7d6f62;transform:scaleX(0.7361);transform-origin:0 0;white-space:pre;">кәсіпкерлер еңбек етеді, өнім шығарады, пайда табады. 4. Олар</div>
<div class="a" style="left:80px;top:850.09px;font-family:'Liberation Sans';font-size:3.5px;line-height:3.5px;color:#7d6f62;transform:scaleX(0.7866);transform-origin:0 0;white-space:pre;">халықты жұмыспен қамтиды, салық төлейді. 5. Кәсіпкер – 6.</div>
<div class="a" style="left:80px;top:854.04px;font-family:'Liberation Sans';font-size:3.5px;line-height:3.5px;color:#7d6f62;transform:scaleX(0.7827);transform-origin:0 0;white-space:pre;">шағын және орта бизнес өкілі. 7. Кәсіпкерлік қызмет түрлері.</div>
<div class="a" style="left:80px;top:857.99px;font-family:'Liberation Sans';font-size:3.5px;line-height:3.5px;color:#7d6f62;transform:scaleX(0.7304);transform-origin:0 0;white-space:pre;">Жеке кәсіпкерлер мемлекеттен қолдау алады. 8. Олар тіркеледі.</div>
<div class="a" style="left:80px;top:861.94px;font-family:'Liberation Sans';font-size:3.5px;line-height:3.5px;color:#7d6f62;transform:scaleX(0.7747);transform-origin:0 0;white-space:pre;">тауар өндіреді. 9. Кәсіпкерлердің жұмысы туралы сөйлеу. 10.</div>
<div class="a" style="left:80px;top:865.89px;font-family:'Liberation Sans';font-size:3.5px;line-height:3.5px;color:#7d6f62;transform:scaleX(0.7672);transform-origin:0 0;white-space:pre;">Шағын кәсіпкерлік халықтың әл-ауқатын арттырады. 11. Кәсіп</div>
<div class="a" style="left:80px;top:869.84px;font-family:'Liberation Sans';font-size:3.5px;line-height:3.5px;color:#7d6f62;transform:scaleX(0.8137);transform-origin:0 0;white-space:pre;">иесі жауапкершілікті сезінуі тиіс. Кәсіпкерлік мәдениет. 12.</div>
<div class="a" style="left:80px;top:873.79px;font-family:'Liberation Sans';font-size:3.5px;line-height:3.5px;color:#7d6f62;transform:scaleX(0.7777);transform-origin:0 0;white-space:pre;">Кәсіпкерлер бірлестігі. 13. Қазақстандағы кәсіпкерлік палата.</div>
<div class="a" style="left:80px;top:877.74px;font-family:'Liberation Sans';font-size:3.5px;line-height:3.5px;color:#7d6f62;transform:scaleX(0.8407);transform-origin:0 0;white-space:pre;">Кәсіпкерліктің дамуы. 14. Кәсіпкерлік қызметті мемлекет</div>
<div class="a" style="left:80px;top:881.69px;font-family:'Liberation Sans';font-size:3.5px;line-height:3.5px;color:#7d6f62;transform:scaleX(0.7063);transform-origin:0 0;white-space:pre;">реттейді. 15. Кәсіпкерлікті дамыту бағдарламалары.</div>
<div class="a" style="left:34px;top:939px;width:230px;height:90px;background:#fff;border:1px solid #c6c6c6;border-bottom:none"></div>
<div class="a" style="left:35px;top:940px;width:228px;height:78px;overflow:hidden">
<svg class="a" style="left:0px;top:0px;" width="228" height="170" viewBox="0 0 228 170"><defs><linearGradient id="pg0_0" x1="0" x2="1"><stop offset="0" stop-color="#f4f4f4"/><stop offset="0.06" stop-color="#d9d9d9"/><stop offset="0.25" stop-color="#ececec"/><stop offset="0.7" stop-color="#e4e4e4"/><stop offset="0.93" stop-color="#e6e6e6"/><stop offset="1" stop-color="#c8c8c8"/></linearGradient>
    <linearGradient id="pr0_0" x1="0" x2="1"><stop offset="0" stop-color="#cfcfcf"/><stop offset="0.06" stop-color="#ececec"/><stop offset="0.5" stop-color="#efefef"/><stop offset="0.92" stop-color="#e2e2e2"/><stop offset="0.97" stop-color="#d0d0d0"/><stop offset="1" stop-color="#f0f0f0"/></linearGradient></defs>
    <path d="M25 14L203 14L206.5 162L21.5 162Z" fill="#3a3a3a"/>
    <path d="M26.5 15.5C60 8 100 8 115 14L115 159.5C100 157 60 157 23 160.8Z" fill="url(#pg0_0)"/>
    <path d="M115 14C130 8 168 8 201.5 15.5L205 160.8C168 157 130 157 115 159.5Z" fill="url(#pr0_0)"/>
    <path d="M23.5 158.5C60 154 100 154 115 157.5C130 154 168 154 204.5 158.5L205 160.5C168 156.5 130 156.5 115 159.3C100 156.5 60 156.5 23 160.5Z" fill="#8a8a8a" opacity="0.5"/>
    <path d="M115 14V158" stroke="#6a6a6a" stroke-width="0.8"/></svg>
</div>
<div class="a" style="left:84px;top:986.15px;font-family:'Liberation Sans';font-size:14px;line-height:14px;color:#111;font-weight:700;font-style:italic;transform:scaleX(1.0441);transform-origin:0 0;white-space:pre;">Сау</div>
<div class="a" style="left:84px;top:1005.65px;font-family:'Liberation Sans';font-size:14px;line-height:14px;color:#111;font-weight:700;font-style:italic;transform:scaleX(1.0535);transform-origin:0 0;white-space:pre;">болыныздар!</div>
<div class="a" style="left:303px;top:157px;width:1617px;height:812px;background:#e6e6e6;"></div>
<div class="a" style="left:305px;top:192px;width:1599px;height:81px;background:linear-gradient(90deg,#7d7d97 0px,#787893 480px,#737390 620px,#6b6b86 850px,#656580 1150px,#60607a 1450px,#5d5d75 1599px)"></div>
<div class="a" style="left:305px;top:192px;width:610px;height:81px;background:linear-gradient(90deg,#8888a6 0px,#8383a1 130px,#8787a5 300px,#8c8caa 430px,#8a8aa8 520px,#8585a2 610px);-webkit-mask-image:linear-gradient(33.2deg,#000 0%,#000 78.5%,transparent 86%);mask-image:linear-gradient(33.2deg,#000 0%,#000 78.5%,transparent 86%)"></div>
<div class="a" style="left:305px;top:273px;width:1599px;height:676px;background:#ffffff;"></div>
<div class="a" style="left:305px;top:277px;width:148px;height:672px;background:#609bd3;"></div>
<div class="a" style="left:452px;top:277px;width:1px;height:672px;background:#7099bb;"></div>
<div class="a" style="left:305px;top:277px;width:2px;height:672px;background:#6a97c0;"></div>
<div class="a" style="left:304px;top:192px;width:1px;height:757px;background:#dcebfa;"></div>
<div class="a" style="left:305px;top:192px;width:1599px;height:1px;background:rgba(255,255,255,0.3);"></div>
<div class="a" style="left:456px;top:277px;width:1153px;height:672px;background:#e0e9f3;"></div>
<div class="a" style="left:1613px;top:277px;width:291px;height:672px;background:#e0e9f3;"></div>
<div class="a" style="left:463px;top:275.4px;font-family:'Liberation Serif';font-size:48px;line-height:65.8px;color:#000"><b>Айтылым</b>.<br>4-тапсырма «ПОПС» формуласын қолданып, мәтіндегі<br>ақпараттар бойынша өз пікіріңді дәлелде.</div>
<div class="a" style="left:1613px;top:277px;width:291px;height:672px;overflow:hidden"><div class="a" style="left:7px;top:-1.6px;font-family:'Liberation Serif';font-size:48px;line-height:65.8px;color:#000">«ПОПС»<br>формуласын<br>қолданып, мәтіндегі<br>ақпараттар бойынша<br>өз пікіріңді дәлелдеп<br>айтады.</div></div>
<div class="a" style="left:305px;top:276px;width:1599px;height:1px;background:#858b94;"></div>
<div class="a" style="left:1425px;top:271px;width:11px;height:11px;border-radius:50%;background:#fff;border:2px solid #7a7a7a"></div>
<div class="a" style="left:500px;top:569px;width:1080px;height:295px;background:#ffffff;"></div>
<div class="a" style="left:543px;top:593.14px;font-family:'Liberation Sans';font-size:40px;line-height:40px;color:#1e1e1e;font-weight:700;transform:scaleX(0.7395);transform-origin:0 0;white-space:pre;-webkit-text-stroke:0.5px #1e1e1e;">Бірінші сөйлем.</div>
<div class="a" style="left:786px;top:593.14px;font-family:'Liberation Sans';font-size:40px;line-height:40px;color:#333333;transform:scaleX(0.7005);transform-origin:0 0;white-space:pre;-webkit-text-stroke:0.7px #333333;">«Менің ойымша....».</div>
<div class="a" style="left:543px;top:645.14px;font-family:'Liberation Sans';font-size:40px;line-height:40px;color:#1e1e1e;font-weight:700;transform:scaleX(0.7564);transform-origin:0 0;white-space:pre;-webkit-text-stroke:0.5px #1e1e1e;">Екінші сөйлем.</div>
<div class="a" style="left:777.7px;top:645.14px;font-family:'Liberation Sans';font-size:40px;line-height:40px;color:#333333;transform:scaleX(0.6967);transform-origin:0 0;white-space:pre;-webkit-text-stroke:0.7px #333333;">«Себебі мен оны .... деп түсінемін».</div>
<div class="a" style="left:543px;top:697.74px;font-family:'Liberation Sans';font-size:40px;line-height:40px;color:#1e1e1e;font-weight:700;transform:scaleX(0.7639);transform-origin:0 0;white-space:pre;-webkit-text-stroke:0.5px #1e1e1e;">Үшінші сөйлем.</div>
<div class="a" style="left:784.5px;top:697.74px;font-family:'Liberation Sans';font-size:40px;line-height:40px;color:#333333;transform:scaleX(0.7100);transform-origin:0 0;white-space:pre;-webkit-text-stroke:0.7px #333333;">«Оны мен .... деген фактілермен, мысалдармен дәлелдей</div>
<div class="a" style="left:500px;top:749.89px;font-family:'Liberation Sans';font-size:40px;line-height:40px;color:#333333;transform:scaleX(0.7018);transform-origin:0 0;white-space:pre;-webkit-text-stroke:0.7px #333333;">аламын».</div>
<div class="a" style="left:543px;top:802.14px;font-family:'Liberation Sans';font-size:40px;line-height:40px;color:#1e1e1e;font-weight:700;transform:scaleX(0.7383);transform-origin:0 0;white-space:pre;-webkit-text-stroke:0.5px #1e1e1e;">Соңғы сөйлем.</div>
<div class="a" style="left:773px;top:802.14px;font-family:'Liberation Sans';font-size:40px;line-height:40px;color:#333333;transform:scaleX(0.7209);transform-origin:0 0;white-space:pre;-webkit-text-stroke:0.7px #333333;">«Осыған байланысты мен ... деген шешімге келдім».</div>
<div class="a" style="left:1904px;top:157px;width:16px;height:812px;background:#e6e6e6;"></div>
<div class="a" style="left:1905px;top:174px;width:14px;height:723px;background:#dadada;"></div>
<div class="a" style="left:1904px;top:159px;width:15px;height:15px;background:#fff;border:1px solid #bcbcbc"></div>
<svg class="a" style="left:1904px;top:159px;" width="15" height="15" viewBox="0 0 15 15"><path d="M3.5 9.5H11.5L7.5 5.5z" fill="#606060"/></svg>
<div class="a" style="left:1904px;top:898px;width:15px;height:15px;background:#fff;border:1px solid #bcbcbc"></div>
<svg class="a" style="left:1904px;top:898px;" width="15" height="15" viewBox="0 0 15 15"><path d="M3.5 5.5H11.5L7.5 9.5z" fill="#606060"/></svg>
<div class="a" style="left:1905px;top:630px;width:13px;height:39px;background:#fff;border:1px solid #a8a8a8"></div>
<svg class="a" style="left:1906px;top:915px;" width="12" height="30" viewBox="0 0 12 30"><path d="M2 5H10L6 1z M2 9H10L6 5z" fill="#606060"/><path d="M2 21H10L6 25z M2 25H10L6 29z" fill="#606060"/></svg>
<div class="a" style="left:305px;top:949px;width:1599px;height:17px;background:#e6e6e6;"></div>
<div class="a" style="left:306px;top:950px;width:1597px;height:15px;background:#dadada;"></div>
<div class="a" style="left:307px;top:950px;width:15px;height:15px;background:#fff;border:1px solid #bcbcbc"></div>
<svg class="a" style="left:307px;top:950px;" width="15" height="15" viewBox="0 0 15 15"><path d="M9.5 3.5V11.5L5.5 7.5z" fill="#606060"/></svg>
<div class="a" style="left:1886px;top:950px;width:15px;height:15px;background:#fff;border:1px solid #bcbcbc"></div>
<svg class="a" style="left:1886px;top:950px;" width="15" height="15" viewBox="0 0 15 15"><path d="M5.5 3.5V11.5L9.5 7.5z" fill="#606060"/></svg>
<div class="a" style="left:508px;top:950px;width:847px;height:15px;background:#fff;border:1px solid #a8a8a8"></div>
<div class="a" style="left:303px;top:969px;width:1617px;height:1px;background:#c6c6c6;"></div>
<div class="a" style="left:303px;top:970px;width:1617px;height:48px;background:#e6e6e6;"></div>
<div class="a" style="left:315px;top:980.00px;font-family:'Liberation Sans';font-size:13px;line-height:13px;color:#505050;transform:scaleX(1.1178);transform-origin:0 0;white-space:pre;">Щелкните, чтобы добавить заметки</div>
<div class="a" style="left:0px;top:1018px;width:1920px;height:1px;background:#d0d0d0;"></div>
<div class="a" style="left:0px;top:1019px;width:1920px;height:21px;background:#f3f3f3;"></div>
<div class="a" style="left:9px;top:1023.57px;font-family:'Liberation Sans';font-size:11.5px;line-height:11.5px;color:#333;transform:scaleX(0.9399);transform-origin:0 0;white-space:pre;">Слайд 5 из 6</div>
<svg class="a" style="left:92px;top:1021px;" width="15" height="14" viewBox="0 0 15 14"><path d="M0.5 1.5C3 0.5 5 0.5 7 2C9 0.5 11 0.5 13.5 1.5V11.5C11 10.5 9 10.5 7 12C5 10.5 3 10.5 0.5 11.5Z" fill="none" stroke="#777"/><path d="M7 2V12" stroke="#777"/><path d="M8.5 6L10 8L13.5 3.5" fill="none" stroke="#777"/></svg>
<div class="a" style="left:123px;top:1023.57px;font-family:'Liberation Sans';font-size:11.5px;line-height:11.5px;color:#333;white-space:pre;">казахский</div>
<svg class="a" style="left:1383px;top:1022px;" width="11" height="13" viewBox="0 0 11 13"><path d="M2.5 3.5L5.5 0.5L8.5 3.5Z" fill="#555"/><path d="M0 5.5H11M1 8.5H10M0 11.5H11" stroke="#555" stroke-width="1"/></svg>
<div class="a" style="left:1399.4px;top:1023.57px;font-family:'Liberation Sans';font-size:11.5px;line-height:11.5px;color:#333;transform:scaleX(0.9776);transform-origin:0 0;white-space:pre;">Заметки</div>
<svg class="a" style="left:1463px;top:1021px;" width="14" height="14" viewBox="0 0 14 14"><path d="M1 0.5H13A0.5 0.5 0 0 1 13.5 1V9A0.5 0.5 0 0 1 13 9.5H6L3 13V9.5H1A0.5 0.5 0 0 1 0.5 9V1A0.5 0.5 0 0 1 1 0.5Z" fill="#666"/></svg>
<div class="a" style="left:1480px;top:1023.57px;font-family:'Liberation Sans';font-size:11.5px;line-height:11.5px;color:#333;transform:scaleX(1.0315);transform-origin:0 0;white-space:pre;">Примечания</div>
<div class="a" style="left:1568px;top:1019px;width:38px;height:21px;background:#c8c8c8;"></div>
<svg class="a" style="left:1580px;top:1022px;" width="14" height="14" viewBox="0 0 14 14"><rect x="0.5" y="0.5" width="13" height="13" fill="none" stroke="#666"/><path d="M3.5 0.5V13.5M3.5 10.5H13.5" stroke="#666"/><rect x="6" y="3" width="5" height="4" fill="none" stroke="#666"/></svg>
<svg class="a" style="left:1618px;top:1022px;" width="14" height="14" viewBox="0 0 14 14"><rect x="0.5" y="0.5" width="5" height="5" fill="none" stroke="#777"/><rect x="8.5" y="0.5" width="5" height="5" fill="none" stroke="#777"/><rect x="0.5" y="8.5" width="5" height="5" fill="none" stroke="#777"/><rect x="8.5" y="8.5" width="5" height="5" fill="none" stroke="#777"/></svg>
<svg class="a" style="left:1656px;top:1022px;" width="14" height="14" viewBox="0 0 14 14"><path d="M0.5 1.5C3 0.5 5 0.5 7 2C9 0.5 11 0.5 13.5 1.5V12.5C11 11.5 9 11.5 7 13C5 11.5 3 11.5 0.5 12.5Z" fill="none" stroke="#777"/><path d="M7 2V13M2 4H5.5M2 6.5H5.5M2 9H5.5M8.5 4H12M8.5 6.5H12M8.5 9H12" stroke="#777"/></svg>
<svg class="a" style="left:1693px;top:1022px;" width="15" height="14" viewBox="0 0 15 14"><path d="M0.5 1H14.5" stroke="#777"/><rect x="2" y="1" width="11" height="6.5" fill="none" stroke="#777"/><path d="M7.5 7.5V13.5M4.5 13.5H10.5" stroke="#777"/></svg>
<div class="a" style="left:1724.5px;top:1028.5px;width:6px;height:1.5px;background:#555;"></div>
<div class="a" style="left:1735.5px;top:1029px;width:98px;height:1px;background:#b0b0b0;"></div>
<div class="a" style="left:1785px;top:1025px;width:1px;height:9px;background:#b0b0b0;"></div>
<div class="a" style="left:1815px;top:1022px;width:5px;height:14px;background:#666;"></div>
<svg class="a" style="left:1838px;top:1024px;" width="9" height="9" viewBox="0 0 9 9"><path d="M4.5 0V9M0 4.5H9" stroke="#555" stroke-width="1.5"/></svg>
<div class="a" style="left:1857px;top:1023.57px;font-family:'Liberation Sans';font-size:11.5px;line-height:11.5px;color:#333;transform:scaleX(0.9046);transform-origin:0 0;white-space:pre;">300 %</div>
<svg class="a" style="left:1900px;top:1022px;" width="15" height="15" viewBox="0 0 15 15"><rect x="0.5" y="0.5" width="14" height="14" fill="none" stroke="#777"/><path d="M3 3L6 6M3 3V5.5M3 3H5.5M12 3L9 6M12 3V5.5M12 3H9.5M3 12L6 9M3 12V9.5M3 12H5.5M12 12L9 9M12 12V9.5M12 12H9.5" fill="none" stroke="#777"/></svg>
<div class="a" style="left:0;top:1040px;width:1920px;height:40px;background:linear-gradient(90deg,#1f3541 0%,#20343f 35%,#1f3040 55%,#1c2a40 80%,#1b2740 100%)"></div>
<svg class="a" style="left:16px;top:1051px;" width="17" height="18" viewBox="0 0 17 18"><path d="M0 2.3L7 1.2V8.2H0Z M8 1L16.5 0V8.2H8Z M0 9.2H7V16.3L0 15.2Z M8 9.2H16.5V17.5L8 16.4Z" fill="#fff"/></svg>
<div class="a" style="left:48px;top:1040px;width:344px;height:40px;background:#f2f2f2;"></div>
<div class="a" style="left:48px;top:1040px;width:344px;height:1px;background:#ffffff;"></div>
<svg class="a" style="left:59px;top:1052px;" width="18" height="17" viewBox="0 0 18 17"><circle cx="11" cy="6.5" r="5.3" fill="none" stroke="#222" stroke-width="1.3"/><path d="M7.2 10.3L1 16.5" stroke="#222" stroke-width="1.4"/></svg>
<div class="a" style="left:88.75px;top:1053.65px;font-family:'Liberation Sans';font-size:14px;line-height:14px;color:#333;transform:scaleX(1.0331);transform-origin:0 0;white-space:pre;">Введите здесь текст для поиска</div>
<svg class="a" style="left:407px;top:1051px;" width="18" height="17" viewBox="0 0 18 17"><rect x="2.5" y="3.5" width="10" height="9" fill="none" stroke="#fff" stroke-width="1.2"/><path d="M0.5 1.5H14.5M0.5 15.5H14.5" stroke="#fff" stroke-width="1.2"/><path d="M16.5 0V3M16.5 5V11M16.5 13V17" stroke="#fff" stroke-width="1.5"/></svg>
<svg class="a" style="left:456px;top:1051px;" width="22" height="18" viewBox="0 0 22 18"><path d="M0 1H8L10 3H22V17H0Z" fill="#e8a92b"/><path d="M0 5H22V17H0Z" fill="#f8d06a"/><rect x="6" y="10" width="10" height="5" fill="#2f8ad8"/><rect x="8" y="12" width="6" height="5" fill="#f8d06a"/></svg>
<svg class="a" style="left:504px;top:1050px;" width="26" height="22" viewBox="0 0 26 22"><circle cx="11" cy="11" r="10" fill="#db4437"/><path d="M11 11L2.3 16A10 10 0 0 0 16 19.7Z" fill="#0f9d58"/><path d="M11 11L16 19.7A10 10 0 0 0 21 11Z" fill="#f4b400"/><path d="M11 11L21 11A10 10 0 0 0 19.5 5.5H11Z" fill="#f4b400"/><circle cx="11" cy="11" r="4.5" fill="#fff"/><circle cx="11" cy="11" r="3.5" fill="#4285f4"/><ellipse cx="18" cy="15.5" rx="7" ry="5.5" fill="#555" transform="rotate(25 18 15.5)"/><ellipse cx="17.5" cy="14.5" rx="5" ry="3.5" fill="#222" transform="rotate(25 17.5 14.5)"/><path d="M14 13L19 16" stroke="#c33" stroke-width="1.2"/></svg>
<div class="a" style="left:541px;top:1040px;width:48px;height:40px;background:#3b505c;"></div>
<div class="a" style="left:541px;top:1077.5px;width:48px;height:2.5px;background:#8fc3ea;"></div>
<svg class="a" style="left:553px;top:1050px;" width="24" height="20" viewBox="0 0 24 20"><rect x="9" y="1" width="14" height="18" fill="#fff"/><path d="M12 4H21M12 7H21M12 10H21M12 13H21" stroke="#d24726" stroke-width="1.3"/><rect x="0" y="3" width="14" height="16" fill="#d24726"/><text x="2.5" y="15" font-family="Liberation Sans" font-weight="700" font-size="11" fill="#fff">P</text></svg>
<svg class="a" style="left:602px;top:1050px;" width="23" height="21" viewBox="0 0 23 21"><circle cx="11.5" cy="10" r="9.8" fill="#fff"/><path d="M2 19L3.5 14L6.5 17Z" fill="#fff"/><circle cx="11.5" cy="10" r="8" fill="#2bb741"/><path d="M8 6C7 7 7 9 9 11.5C11 14 13 14.5 14.5 14L15 12.5L13 11.5L12 12.5C11 12 10 11 9.5 10L10.5 9L9.5 7Z" fill="#fff"/></svg>
<svg class="a" style="left:651px;top:1050px;" width="24" height="20" viewBox="0 0 24 20"><rect x="9" y="1" width="14" height="18" fill="#fff"/><path d="M12 4H21M12 7H21M12 10H21M12 13H21M12 16H21" stroke="#2b579a" stroke-width="1.3"/><rect x="0" y="3" width="14" height="16" fill="#2b579a"/><text x="1" y="15" font-family="Liberation Sans" font-weight="700" font-size="10" fill="#fff">W</text></svg>
<div class="a" style="left:688px;top:1040px;width:48px;height:40px;background:#b1652d;"></div>
<div class="a" style="left:688px;top:1077.5px;width:48px;height:2.5px;background:#f2852f;"></div>
<svg class="a" style="left:702px;top:1051px;" width="20" height="19" viewBox="0 0 20 19"><rect x="0.5" y="0.5" width="19" height="15" rx="4" fill="#7289da"/><path d="M12 15L16 18.5V14Z" fill="#7289da"/><path d="M4.5 5.5C6 4.5 7.5 4.3 8.5 4.5L9 5.3C9.7 5.2 10.3 5.2 11 5.3L11.5 4.5C12.5 4.3 14 4.5 15.5 5.5C16.5 7.5 16.8 9.5 16.5 11.5C15.5 12.3 14.5 12.7 13.5 13L12.8 12C13.2 11.8 13.6 11.6 14 11.3C11.5 12.5 8.5 12.5 6 11.3C6.4 11.6 6.8 11.8 7.2 12L6.5 13C5.5 12.7 4.5 12.3 3.5 11.5C3.2 9.5 3.5 7.5 4.5 5.5Z" fill="#fff"/><circle cx="8" cy="9" r="1.1" fill="#7289da"/><circle cx="12" cy="9" r="1.1" fill="#7289da"/></svg>
<div class="a" style="left:447.3px;top:1077.5px;width:39.7px;height:2.5px;background:#6a9cc4;"></div>
<div class="a" style="left:495.8px;top:1077.5px;width:40.6px;height:2.5px;background:#6a9cc4;"></div>
<div class="a" style="left:593.9px;top:1077.5px;width:40.6px;height:2.5px;background:#6a9cc4;"></div>
<div class="a" style="left:643.4px;top:1077.5px;width:39.6px;height:2.5px;background:#6a9cc4;"></div>
<svg class="a" style="left:1675px;top:1056px;" width="13" height="8" viewBox="0 0 13 8"><path d="M0.7 7L6.5 1L12.3 7" fill="none" stroke="#fff" stroke-width="1.2"/></svg>
<svg class="a" style="left:1699px;top:1052px;" width="13" height="16" viewBox="0 0 13 16"><path d="M3 3A6 6 0 0 1 10 3M3 13A6 6 0 0 0 10 13" fill="none" stroke="#fff" stroke-width="1"/><rect x="1" y="5" width="7" height="6" rx="1" fill="none" stroke="#fff" stroke-width="1.1"/><path d="M8 7L12 5V11L8 9" fill="none" stroke="#fff" stroke-width="1.1"/></svg>
<svg class="a" style="left:1721px;top:1052px;" width="17" height="15" viewBox="0 0 17 15"><path d="M0.5 5H3.5L7.5 1V14L3.5 10H0.5Z" fill="none" stroke="#fff" stroke-width="1.1"/><path d="M10 5A3 3 0 0 1 10 10M12 3A6 6 0 0 1 12 12M14 1A9 9 0 0 1 14 14" fill="none" stroke="#fff" stroke-width="1.1"/></svg>
<svg class="a" style="left:1744px;top:1053px;" width="17" height="15" viewBox="0 0 17 15"><rect x="4.5" y="1.5" width="12" height="9" fill="none" stroke="#fff" stroke-width="1.1"/><path d="M10.5 10.5V13.5M7 13.5H14" stroke="#fff" stroke-width="1.1"/><rect x="0.5" y="0.5" width="4" height="4" fill="#1c2a40" stroke="#fff"/><path d="M2.5 4.5V13.5" stroke="#fff"/></svg>
<div class="a" style="left:1772.4px;top:1053.12px;font-family:'Liberation Sans';font-size:12.5px;line-height:12.5px;color:#ffffff;transform:scaleX(0.8789);transform-origin:0 0;white-space:pre;">РУС</div>
<div class="a" style="left:1820.5px;top:1043.62px;font-family:'Liberation Sans';font-size:12.5px;line-height:12.5px;color:#ffffff;transform:scaleX(0.8472);transform-origin:0 0;white-space:pre;">16:49</div>
<div class="a" style="left:1807.6px;top:1061.92px;font-family:'Liberation Sans';font-size:12.5px;line-height:12.5px;color:#ffffff;transform:scaleX(0.8312);transform-origin:0 0;white-space:pre;">05.02.2021</div>
<svg class="a" style="left:1878px;top:1052px;" width="26" height="26" viewBox="0 0 26 26"><path d="M0.5 0.5H16.5V12.5H6L3 15.5V12.5H0.5Z" fill="#fff"/><path d="M3 3.5H14M3 6.5H14M3 9.5H12" stroke="#1c2a40" stroke-width="1.2"/><circle cx="16.5" cy="16" r="8" fill="#2b2b2b" stroke="#888" stroke-width="1"/><text x="12.8" y="20.5" font-family="Liberation Sans" font-weight="700" font-size="12" fill="#fff">2</text></svg>
<div class="a" style="left:1915px;top:1040px;width:1px;height:40px;background:#5a6578;"></div>
</body></html>
